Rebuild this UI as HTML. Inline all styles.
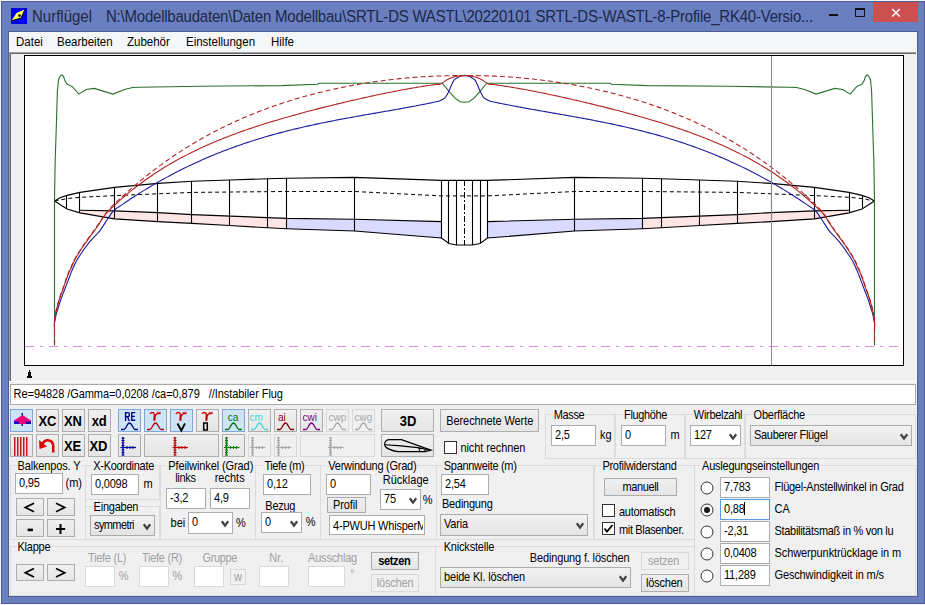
<!DOCTYPE html>
<html><head><meta charset="utf-8"><style>
html,body{margin:0;padding:0;width:925px;height:605px;overflow:hidden;background:#fff;}
body{position:relative;font-family:"Liberation Sans", sans-serif;}
div{font-family:"Liberation Sans", sans-serif;}
</style></head><body>
<div style="position:absolute;left:0px;top:0px;width:925px;height:605px;background:#f4f6fb;"></div>
<div style="position:absolute;left:1px;top:1px;width:924px;height:603px;background:#4d5d92;"></div>
<div style="position:absolute;left:2px;top:2px;width:922px;height:601px;background:#6a7fc0;"></div>
<div style="position:absolute;left:8px;top:31px;width:910px;height:566px;background:#4d5d92;"></div>
<svg style="position:absolute;left:11px;top:8px" width="16" height="16"><rect width="16" height="16" fill="#0000f0"/><path d="M0.5 12.8 L5.5 5 L14 1.2 L10 10 Z" fill="#ffff60"/><path d="M14 1.2 L10 10 L0.5 12.8" fill="none" stroke="#000" stroke-width="0.9"/><circle cx="8.5" cy="7.6" r="1.3" fill="#000"/></svg>
<div style="position:absolute;left:32px;top:9.00px;font-size:15px;line-height:15px;color:#1c2848;font-weight:normal;letter-spacing:0px;white-space:pre;transform:scaleY(1.1);transform-origin:0 13.000px;">Nurflügel</div>
<div style="position:absolute;left:106px;top:9.00px;font-size:15px;line-height:15px;color:#1c2848;font-weight:normal;letter-spacing:-0.22px;white-space:pre;transform:scaleY(1.1);transform-origin:0 13.000px;">N:\Modellbaudaten\Daten Modellbau\SRTL-DS WASTL\20220101 SRTL-DS-WASTL-8-Profile_RK40-Versio...</div>
<div style="position:absolute;left:873px;top:2px;width:45px;height:20px;background:#cd5050;"></div>
<svg style="position:absolute;left:891px;top:8px" width="11" height="11"><path d="M1.3 1 L8.7 8.5 M8.7 1 L1.3 8.5" stroke="#fff" stroke-width="1.5"/></svg>
<div style="position:absolute;left:855px;top:8px;width:10px;height:9px;box-sizing:border-box;border:1px solid #111;border-top-width:2px;"></div>
<div style="position:absolute;left:829px;top:14px;width:9px;height:2px;background:#111;"></div>
<div style="position:absolute;left:9px;top:32px;width:908px;height:564px;background:#f0f0f0;"></div>
<div style="position:absolute;left:9px;top:32px;width:908px;height:20px;background:#f5f6f7;"></div>
<div style="position:absolute;left:16px;top:37.00px;font-size:11.5px;line-height:11.5px;color:#000;font-weight:normal;letter-spacing:0px;white-space:pre;transform:scaleY(1.1);transform-origin:0 9.000px;">Datei</div>
<div style="position:absolute;left:57px;top:37.00px;font-size:11.5px;line-height:11.5px;color:#000;font-weight:normal;letter-spacing:0px;white-space:pre;transform:scaleY(1.1);transform-origin:0 9.000px;">Bearbeiten</div>
<div style="position:absolute;left:127px;top:37.00px;font-size:11.5px;line-height:11.5px;color:#000;font-weight:normal;letter-spacing:0px;white-space:pre;transform:scaleY(1.1);transform-origin:0 9.000px;">Zubehör</div>
<div style="position:absolute;left:186px;top:37.00px;font-size:11.5px;line-height:11.5px;color:#000;font-weight:normal;letter-spacing:0px;white-space:pre;transform:scaleY(1.1);transform-origin:0 9.000px;">Einstellungen</div>
<div style="position:absolute;left:271px;top:37.00px;font-size:11.5px;line-height:11.5px;color:#000;font-weight:normal;letter-spacing:0px;white-space:pre;transform:scaleY(1.1);transform-origin:0 9.000px;">Hilfe</div>
<div style="position:absolute;left:9px;top:52px;width:908px;height:1px;background:#a0a0a0;"></div>
<div style="position:absolute;left:9px;top:53px;width:908px;height:1px;background:#696969;"></div>
<div style="position:absolute;left:9px;top:52px;width:1px;height:330px;background:#a0a0a0;"></div>
<div style="position:absolute;left:10px;top:53px;width:1px;height:328px;background:#696969;"></div>
<div style="position:absolute;left:9px;top:381px;width:908px;height:1px;background:#fff;"></div>
<div style="position:absolute;left:916px;top:52px;width:1px;height:330px;background:#fff;"></div>
<div style="position:absolute;left:24px;top:55px;width:880px;height:311px;box-sizing:border-box;border:1px solid #000;background:#fff;"></div>
<svg style="position:absolute;left:0;top:0" width="925" height="605" viewBox="0 0 925 605"><defs><clipPath id="cb"><rect x="25" y="56" width="878" height="309"/></clipPath></defs><g clip-path="url(#cb)"><path d="M80.00 210.20 L114.50 210.90 L158.00 212.60 L192.00 214.60 L229.50 216.11 L268.00 217.66 L286.50 218.40 L286.50 228.80 L268.00 227.80 L229.50 225.50 L192.00 223.40 L158.00 221.60 L114.50 218.90 L80.00 212.90 Z" fill="#ffe6e6"/><path d="M849.00 212.90 L814.50 218.90 L771.00 221.60 L737.00 223.40 L699.50 225.50 L661.00 227.80 L642.50 228.80 L642.50 218.40 L661.00 217.66 L699.50 216.11 L737.00 214.60 L771.00 212.60 L814.50 210.90 L849.00 210.20 Z" fill="#ffe6e6"/><path d="M286.50 218.40 L354.50 219.30 L441.50 221.60 L441.50 238.00 L354.50 231.00 L286.50 228.80 Z" fill="#dadaff"/><path d="M642.50 228.80 L574.50 231.00 L487.50 238.00 L487.50 221.60 L574.50 219.30 L642.50 218.40 Z" fill="#dadaff"/><path d="M54.50 201.00 L60.00 197.80 L67.00 195.40 L80.00 192.40 L114.50 187.40 L158.00 183.40 L192.00 181.30 L229.50 180.00 L268.00 178.80 L286.50 178.20 L354.50 177.40 L441.50 180.40 L464.50 180.40 L487.50 180.40 L574.50 177.40 L642.50 178.20 L661.00 178.80 L699.50 180.00 L737.00 181.30 L771.00 183.40 L814.50 187.40 L849.00 192.40 L862.00 195.40 L869.00 197.80 L874.50 201.00" fill="none" stroke="#000" stroke-width="1.1"/><path d="M54.50 201.00 L67.00 209.00 L80.00 212.90 L114.50 218.90 L158.00 221.60 L192.00 223.40 L229.50 225.50 L268.00 227.80 L286.50 228.80 L354.50 231.00 L441.50 238.00 L449.00 243.50 L456.50 245.00 L464.50 245.00 L472.50 245.00 L480.00 243.50 L487.50 238.00 L574.50 231.00 L642.50 228.80 L661.00 227.80 L699.50 225.50 L737.00 223.40 L771.00 221.60 L814.50 218.90 L849.00 212.90 L862.00 209.00 L874.50 201.00" fill="none" stroke="#000" stroke-width="1.1"/><path d="M80.00 210.20 L114.50 210.90 L158.00 212.60 L192.00 214.60 L286.50 218.40 L354.50 219.30 L441.50 221.60" fill="none" stroke="#000" stroke-width="1.1"/><path d="M487.50 221.60 L574.50 219.30 L642.50 218.40 L737.00 214.60 L771.00 212.60 L814.50 210.90 L849.00 210.20" fill="none" stroke="#000" stroke-width="1.1"/><path d="M54.50 201.00 L67.00 198.60 L80.00 197.30 L114.50 195.60 L192.00 192.40 L286.50 191.50 L354.50 191.50 L441.50 195.90 L464.50 195.90 L487.50 195.90 L574.50 191.50 L642.50 191.50 L737.00 192.40 L814.50 195.60 L849.00 197.30 L862.00 198.60 L874.50 201.00" fill="none" stroke="#000" stroke-width="1" stroke-dasharray="4 3"/><line x1="66.5" y1="195.6" x2="66.5" y2="208.7" stroke="#000" stroke-width="1.1"/><line x1="862.5" y1="195.6" x2="862.5" y2="208.7" stroke="#000" stroke-width="1.1"/><line x1="79.5" y1="192.5" x2="79.5" y2="212.8" stroke="#000" stroke-width="1.1"/><line x1="849.5" y1="192.5" x2="849.5" y2="212.8" stroke="#000" stroke-width="1.1"/><line x1="114.5" y1="187.4" x2="114.5" y2="218.9" stroke="#000" stroke-width="1.1"/><line x1="814.5" y1="187.4" x2="814.5" y2="218.9" stroke="#000" stroke-width="1.1"/><line x1="157.5" y1="183.4" x2="157.5" y2="221.6" stroke="#000" stroke-width="1.1"/><line x1="771.5" y1="183.4" x2="771.5" y2="221.6" stroke="#000" stroke-width="1.1"/><line x1="191.5" y1="181.3" x2="191.5" y2="223.4" stroke="#000" stroke-width="1.1"/><line x1="737.5" y1="181.3" x2="737.5" y2="223.4" stroke="#000" stroke-width="1.1"/><line x1="229.5" y1="180.0" x2="229.5" y2="225.5" stroke="#000" stroke-width="1.1"/><line x1="699.5" y1="180.0" x2="699.5" y2="225.5" stroke="#000" stroke-width="1.1"/><line x1="267.5" y1="178.8" x2="267.5" y2="227.8" stroke="#000" stroke-width="1.1"/><line x1="661.5" y1="178.8" x2="661.5" y2="227.8" stroke="#000" stroke-width="1.1"/><line x1="286.5" y1="178.2" x2="286.5" y2="228.8" stroke="#000" stroke-width="1.1"/><line x1="642.5" y1="178.2" x2="642.5" y2="228.8" stroke="#000" stroke-width="1.1"/><line x1="354.5" y1="177.4" x2="354.5" y2="231.0" stroke="#000" stroke-width="1.1"/><line x1="574.5" y1="177.4" x2="574.5" y2="231.0" stroke="#000" stroke-width="1.1"/><line x1="441.5" y1="180.4" x2="441.5" y2="238.0" stroke="#000" stroke-width="1.1"/><line x1="487.5" y1="180.4" x2="487.5" y2="238.0" stroke="#000" stroke-width="1.1"/><line x1="448.5" y1="180.4" x2="448.5" y2="243.1" stroke="#000" stroke-width="1.1"/><line x1="480.5" y1="180.4" x2="480.5" y2="243.1" stroke="#000" stroke-width="1.1"/><line x1="456.5" y1="180.4" x2="456.5" y2="245.0" stroke="#000" stroke-width="1.1"/><line x1="472.5" y1="180.4" x2="472.5" y2="245.0" stroke="#000" stroke-width="1.1"/><line x1="464.5" y1="180" x2="464.5" y2="245" stroke="#000" stroke-width="1" stroke-dasharray="6 2 2 2"/><path d="M54.50 345.50 L54.50 200.00 L55.20 160.00 L56.20 130.00 L57.40 91.20 L58.50 79.70 L60.50 75.60 L62.00 75.00 L63.60 76.50 L64.90 80.80 L67.20 84.30 L72.40 86.60 L78.80 94.10 L86.30 89.50 L94.40 88.40 L112.90 94.10 L124.50 89.50 L132.60 87.50 L140.00 87.30 L200.00 86.30 L282.00 85.60 L317.70 84.20 L318.50 83.30 L442.20 83.20 L449.00 91.30 L455.00 98.20 L460.00 101.70 L464.50 102.20 L469.00 101.70 L474.00 98.20 L480.00 91.30 L486.80 83.20 L610.50 83.30 L611.30 84.20 L647.00 85.60 L729.00 86.30 L789.00 87.30 L796.40 87.50 L804.50 89.50 L816.10 94.10 L834.60 88.40 L842.70 89.50 L850.20 94.10 L856.60 86.60 L861.80 84.30 L864.10 80.80 L865.40 76.50 L867.00 75.00 L868.50 75.60 L870.50 79.70 L871.60 91.20 L872.80 130.00 L873.80 160.00 L874.50 200.00 L874.50 345.50" fill="none" stroke="#2a702a" stroke-width="1.1"/><path d="M54.50 323.00 C54.75 321.67 55.38 317.50 56.00 315.00 C56.62 312.50 57.37 310.67 58.20 308.00 C59.03 305.33 59.95 302.00 61.00 299.00 C62.05 296.00 63.00 293.92 64.50 290.00 C66.00 286.08 68.50 279.33 70.00 275.50 C71.50 271.67 72.18 269.83 73.50 267.00 C74.82 264.17 75.18 262.72 77.90 258.50 C80.62 254.28 86.15 246.32 89.80 241.70 C93.45 237.08 96.82 234.62 99.80 230.80 C102.78 226.98 105.38 222.18 107.70 218.80 C110.02 215.42 112.03 212.35 113.70 210.49 C115.37 208.64 116.37 208.61 117.70 207.67 C119.03 206.74 120.37 205.82 121.70 204.91 C123.03 204.00 124.37 203.09 125.70 202.19 C127.03 201.30 128.37 200.41 129.70 199.53 C131.03 198.65 132.37 197.78 133.70 196.92 C135.03 196.06 136.37 195.21 137.70 194.36 C139.03 193.52 140.37 192.68 141.70 191.86 C143.03 191.03 144.37 190.21 145.70 189.40 C147.03 188.59 148.37 187.79 149.70 186.99 C151.03 186.20 152.37 185.41 153.70 184.64 C155.03 183.86 156.37 183.09 157.70 182.33 C159.03 181.57 160.37 180.82 161.70 180.07 C163.03 179.33 164.37 178.59 165.70 177.86 C167.03 177.13 168.37 176.41 169.70 175.70 C171.03 174.99 172.37 174.28 173.70 173.59 C175.03 172.89 176.37 172.20 177.70 171.52 C179.03 170.84 180.37 170.16 181.70 169.50 C183.03 168.83 184.37 168.18 185.70 167.53 C187.03 166.88 188.37 166.23 189.70 165.60 C191.03 164.96 192.37 164.34 193.70 163.71 C195.03 163.09 196.37 162.48 197.70 161.88 C199.03 161.27 200.37 160.67 201.70 160.08 C203.03 159.49 204.37 158.91 205.70 158.33 C207.03 157.75 208.37 157.19 209.70 156.62 C211.03 156.06 212.37 155.50 213.70 154.96 C215.03 154.41 216.37 153.87 217.70 153.33 C219.03 152.80 220.37 152.27 221.70 151.75 C223.03 151.23 224.37 150.71 225.70 150.20 C227.03 149.70 228.37 149.19 229.70 148.70 C231.03 148.20 232.37 147.71 233.70 147.23 C235.03 146.75 236.37 146.27 237.70 145.80 C239.03 145.33 240.37 144.87 241.70 144.41 C243.03 143.96 244.37 143.50 245.70 143.06 C247.03 142.61 248.37 142.17 249.70 141.74 C251.03 141.30 252.37 140.88 253.70 140.45 C255.03 140.03 256.37 139.62 257.70 139.20 C259.03 138.79 260.37 138.39 261.70 137.99 C263.03 137.59 264.37 137.19 265.70 136.80 C267.03 136.41 268.37 136.03 269.70 135.65 C271.03 135.27 272.37 134.89 273.70 134.52 C275.03 134.15 276.37 133.79 277.70 133.43 C279.03 133.07 280.37 132.72 281.70 132.36 C283.03 132.01 284.37 131.67 285.70 131.33 C287.03 130.99 288.37 130.65 289.70 130.32 C291.03 129.98 292.37 129.66 293.70 129.33 C295.03 129.01 296.37 128.69 297.70 128.37 C299.03 128.06 300.37 127.74 301.70 127.44 C303.03 127.13 304.37 126.82 305.70 126.52 C307.03 126.22 308.37 125.92 309.70 125.63 C311.03 125.34 312.37 125.05 313.70 124.76 C315.03 124.47 316.37 124.19 317.70 123.91 C319.03 123.63 320.37 123.35 321.70 123.07 C323.03 122.80 324.37 122.53 325.70 122.26 C327.03 121.99 328.37 121.72 329.70 121.46 C331.03 121.20 332.37 120.93 333.70 120.68 C335.03 120.42 336.37 120.16 337.70 119.91 C339.03 119.65 340.37 119.40 341.70 119.15 C343.03 118.90 344.37 118.65 345.70 118.40 C347.03 118.16 348.37 117.91 349.70 117.67 C351.03 117.42 352.37 117.18 353.70 116.94 C355.03 116.70 356.37 116.46 357.70 116.22 C359.03 115.99 360.37 115.75 361.70 115.51 C363.03 115.28 364.37 115.04 365.70 114.81 C367.03 114.57 368.37 114.34 369.70 114.10 C371.03 113.87 372.37 113.64 373.70 113.41 C375.03 113.17 376.37 112.94 377.70 112.71 C379.03 112.48 380.37 112.24 381.70 112.01 C383.03 111.78 384.37 111.55 385.70 111.31 C387.03 111.08 388.37 110.85 389.70 110.61 C391.03 110.38 392.37 110.14 393.70 109.91 C395.03 109.67 396.37 109.44 397.70 109.20 C399.03 108.96 400.37 108.72 401.70 108.48 C403.03 108.24 404.37 108.00 405.70 107.76 C407.03 107.51 408.37 107.27 409.70 107.02 C411.03 106.77 412.37 106.53 413.70 106.28 C415.03 106.02 416.37 105.77 417.70 105.52 C419.03 105.26 420.37 105.01 421.70 104.74 C423.03 104.48 424.37 104.22 425.70 103.96 C427.03 103.69 428.37 103.42 429.70 103.15 C431.03 102.88 432.37 102.61 433.70 102.33 C435.03 102.05 436.85 101.66 437.70 101.48 C438.55 101.30 437.60 101.86 438.80 101.25 C440.00 100.63 443.22 99.49 444.90 97.80 C446.58 96.11 447.80 93.23 448.90 91.10 C450.00 88.97 450.62 86.87 451.50 85.00 C452.38 83.13 453.10 81.18 454.20 79.90 C455.30 78.62 456.88 77.98 458.10 77.30 C459.32 76.62 460.43 76.13 461.50 75.80 C462.57 75.47 463.50 75.30 464.50 75.30 C465.50 75.30 466.43 75.47 467.50 75.80 C468.57 76.13 469.68 76.62 470.90 77.30 C472.12 77.98 473.70 78.62 474.80 79.90 C475.90 81.18 476.62 83.13 477.50 85.00 C478.38 86.87 479.00 88.97 480.10 91.10 C481.20 93.23 482.42 96.11 484.10 97.80 C485.78 99.49 489.00 100.63 490.20 101.25 C491.40 101.86 490.45 101.30 491.30 101.48 C492.15 101.66 493.97 102.05 495.30 102.33 C496.63 102.61 497.97 102.88 499.30 103.15 C500.63 103.42 501.97 103.69 503.30 103.96 C504.63 104.22 505.97 104.48 507.30 104.74 C508.63 105.01 509.97 105.26 511.30 105.52 C512.63 105.77 513.97 106.02 515.30 106.28 C516.63 106.53 517.97 106.77 519.30 107.02 C520.63 107.27 521.97 107.51 523.30 107.76 C524.63 108.00 525.97 108.24 527.30 108.48 C528.63 108.72 529.97 108.96 531.30 109.20 C532.63 109.44 533.97 109.67 535.30 109.91 C536.63 110.14 537.97 110.38 539.30 110.61 C540.63 110.85 541.97 111.08 543.30 111.31 C544.63 111.55 545.97 111.78 547.30 112.01 C548.63 112.24 549.97 112.48 551.30 112.71 C552.63 112.94 553.97 113.17 555.30 113.41 C556.63 113.64 557.97 113.87 559.30 114.10 C560.63 114.34 561.97 114.57 563.30 114.81 C564.63 115.04 565.97 115.28 567.30 115.51 C568.63 115.75 569.97 115.99 571.30 116.22 C572.63 116.46 573.97 116.70 575.30 116.94 C576.63 117.18 577.97 117.42 579.30 117.67 C580.63 117.91 581.97 118.16 583.30 118.40 C584.63 118.65 585.97 118.90 587.30 119.15 C588.63 119.40 589.97 119.65 591.30 119.91 C592.63 120.16 593.97 120.42 595.30 120.68 C596.63 120.93 597.97 121.20 599.30 121.46 C600.63 121.72 601.97 121.99 603.30 122.26 C604.63 122.53 605.97 122.80 607.30 123.07 C608.63 123.35 609.97 123.63 611.30 123.91 C612.63 124.19 613.97 124.47 615.30 124.76 C616.63 125.05 617.97 125.34 619.30 125.63 C620.63 125.92 621.97 126.22 623.30 126.52 C624.63 126.82 625.97 127.13 627.30 127.44 C628.63 127.74 629.97 128.06 631.30 128.37 C632.63 128.69 633.97 129.01 635.30 129.33 C636.63 129.66 637.97 129.98 639.30 130.32 C640.63 130.65 641.97 130.99 643.30 131.33 C644.63 131.67 645.97 132.01 647.30 132.36 C648.63 132.72 649.97 133.07 651.30 133.43 C652.63 133.79 653.97 134.15 655.30 134.52 C656.63 134.89 657.97 135.27 659.30 135.65 C660.63 136.03 661.97 136.41 663.30 136.80 C664.63 137.19 665.97 137.59 667.30 137.99 C668.63 138.39 669.97 138.79 671.30 139.20 C672.63 139.62 673.97 140.03 675.30 140.45 C676.63 140.88 677.97 141.30 679.30 141.74 C680.63 142.17 681.97 142.61 683.30 143.06 C684.63 143.50 685.97 143.96 687.30 144.41 C688.63 144.87 689.97 145.33 691.30 145.80 C692.63 146.27 693.97 146.75 695.30 147.23 C696.63 147.71 697.97 148.20 699.30 148.70 C700.63 149.19 701.97 149.70 703.30 150.20 C704.63 150.71 705.97 151.23 707.30 151.75 C708.63 152.27 709.97 152.80 711.30 153.33 C712.63 153.87 713.97 154.41 715.30 154.96 C716.63 155.50 717.97 156.06 719.30 156.62 C720.63 157.19 721.97 157.75 723.30 158.33 C724.63 158.91 725.97 159.49 727.30 160.08 C728.63 160.67 729.97 161.27 731.30 161.88 C732.63 162.48 733.97 163.09 735.30 163.71 C736.63 164.34 737.97 164.96 739.30 165.60 C740.63 166.23 741.97 166.88 743.30 167.53 C744.63 168.18 745.97 168.83 747.30 169.50 C748.63 170.16 749.97 170.84 751.30 171.52 C752.63 172.20 753.97 172.89 755.30 173.59 C756.63 174.28 757.97 174.99 759.30 175.70 C760.63 176.41 761.97 177.13 763.30 177.86 C764.63 178.59 765.97 179.33 767.30 180.07 C768.63 180.82 769.97 181.57 771.30 182.33 C772.63 183.09 773.97 183.86 775.30 184.64 C776.63 185.41 777.97 186.20 779.30 186.99 C780.63 187.79 781.97 188.59 783.30 189.40 C784.63 190.21 785.97 191.03 787.30 191.86 C788.63 192.68 789.97 193.52 791.30 194.36 C792.63 195.21 793.97 196.06 795.30 196.92 C796.63 197.78 797.97 198.65 799.30 199.53 C800.63 200.41 801.97 201.30 803.30 202.19 C804.63 203.09 805.97 204.00 807.30 204.91 C808.63 205.82 809.97 206.74 811.30 207.67 C812.63 208.61 813.63 208.64 815.30 210.49 C816.97 212.35 818.98 215.42 821.30 218.80 C823.62 222.18 826.22 226.98 829.20 230.80 C832.18 234.62 835.55 237.08 839.20 241.70 C842.85 246.32 848.38 254.28 851.10 258.50 C853.82 262.72 854.18 264.17 855.50 267.00 C856.82 269.83 857.50 271.67 859.00 275.50 C860.50 279.33 863.00 286.08 864.50 290.00 C866.00 293.92 866.95 296.00 868.00 299.00 C869.05 302.00 869.97 305.33 870.80 308.00 C871.63 310.67 872.38 312.50 873.00 315.00 C873.62 317.50 874.25 321.67 874.50 323.00" fill="none" stroke="#1c1c9c" stroke-width="1.1"/><path d="M54.50 330.00 C54.50 328.50 54.25 324.00 54.50 321.00 C54.75 318.00 55.42 314.83 56.00 312.00 C56.58 309.17 57.20 306.83 58.00 304.00 C58.80 301.17 60.02 297.33 60.80 295.00 C61.58 292.67 61.50 293.33 62.70 290.00 C63.90 286.67 66.45 279.00 68.00 275.00 C69.55 271.00 70.75 268.75 72.00 266.00 C73.25 263.25 73.35 262.22 75.50 258.50 C77.65 254.78 81.52 248.65 84.90 243.70 C88.28 238.75 92.33 233.77 95.80 228.80 C99.27 223.83 102.88 217.54 105.70 213.90 C108.52 210.26 110.87 208.73 112.70 206.96 C114.53 205.18 115.37 204.47 116.70 203.26 C118.03 202.05 119.37 200.86 120.70 199.69 C122.03 198.51 123.37 197.36 124.70 196.23 C126.03 195.09 127.37 193.98 128.70 192.88 C130.03 191.78 131.37 190.71 132.70 189.65 C134.03 188.58 135.37 187.54 136.70 186.51 C138.03 185.49 139.37 184.48 140.70 183.49 C142.03 182.49 143.37 181.52 144.70 180.56 C146.03 179.59 147.37 178.65 148.70 177.72 C150.03 176.79 151.37 175.88 152.70 174.98 C154.03 174.08 155.37 173.19 156.70 172.32 C158.03 171.45 159.37 170.59 160.70 169.75 C162.03 168.91 163.37 168.08 164.70 167.26 C166.03 166.45 167.37 165.64 168.70 164.85 C170.03 164.06 171.37 163.29 172.70 162.52 C174.03 161.75 175.37 161.00 176.70 160.26 C178.03 159.52 179.37 158.79 180.70 158.07 C182.03 157.35 183.37 156.64 184.70 155.94 C186.03 155.25 187.37 154.56 188.70 153.88 C190.03 153.21 191.37 152.54 192.70 151.89 C194.03 151.23 195.37 150.59 196.70 149.95 C198.03 149.31 199.37 148.68 200.70 148.07 C202.03 147.45 203.37 146.84 204.70 146.24 C206.03 145.64 207.37 145.05 208.70 144.46 C210.03 143.88 211.37 143.30 212.70 142.73 C214.03 142.17 215.37 141.61 216.70 141.05 C218.03 140.50 219.37 139.96 220.70 139.42 C222.03 138.88 223.37 138.35 224.70 137.83 C226.03 137.30 227.37 136.79 228.70 136.27 C230.03 135.76 231.37 135.26 232.70 134.76 C234.03 134.26 235.37 133.77 236.70 133.28 C238.03 132.80 239.37 132.32 240.70 131.84 C242.03 131.37 243.37 130.90 244.70 130.43 C246.03 129.97 247.37 129.51 248.70 129.06 C250.03 128.60 251.37 128.15 252.70 127.71 C254.03 127.27 255.37 126.83 256.70 126.39 C258.03 125.96 259.37 125.53 260.70 125.10 C262.03 124.67 263.37 124.25 264.70 123.83 C266.03 123.41 267.37 123.00 268.70 122.59 C270.03 122.18 271.37 121.77 272.70 121.37 C274.03 120.97 275.37 120.57 276.70 120.17 C278.03 119.77 279.37 119.38 280.70 118.99 C282.03 118.60 283.37 118.21 284.70 117.83 C286.03 117.45 287.37 117.07 288.70 116.69 C290.03 116.31 291.37 115.94 292.70 115.57 C294.03 115.19 295.37 114.83 296.70 114.46 C298.03 114.09 299.37 113.73 300.70 113.37 C302.03 113.00 303.37 112.65 304.70 112.29 C306.03 111.93 307.37 111.58 308.70 111.23 C310.03 110.87 311.37 110.52 312.70 110.18 C314.03 109.83 315.37 109.48 316.70 109.14 C318.03 108.80 319.37 108.46 320.70 108.12 C322.03 107.78 323.37 107.44 324.70 107.10 C326.03 106.77 327.37 106.44 328.70 106.10 C330.03 105.77 331.37 105.44 332.70 105.12 C334.03 104.79 335.37 104.46 336.70 104.14 C338.03 103.82 339.37 103.49 340.70 103.17 C342.03 102.86 343.37 102.54 344.70 102.22 C346.03 101.90 347.37 101.59 348.70 101.28 C350.03 100.97 351.37 100.66 352.70 100.35 C354.03 100.04 355.37 99.73 356.70 99.43 C358.03 99.12 359.37 98.82 360.70 98.52 C362.03 98.22 363.37 97.92 364.70 97.63 C366.03 97.33 367.37 97.03 368.70 96.74 C370.03 96.45 371.37 96.16 372.70 95.87 C374.03 95.59 375.37 95.30 376.70 95.02 C378.03 94.73 379.37 94.45 380.70 94.18 C382.03 93.90 383.37 93.62 384.70 93.35 C386.03 93.08 387.37 92.80 388.70 92.54 C390.03 92.27 391.37 92.00 392.70 91.74 C394.03 91.48 395.37 91.22 396.70 90.96 C398.03 90.71 399.37 90.45 400.70 90.20 C402.03 89.95 403.37 89.71 404.70 89.46 C406.03 89.22 407.37 88.98 408.70 88.74 C410.03 88.51 411.37 88.27 412.70 88.04 C414.03 87.81 415.37 87.59 416.70 87.37 C418.03 87.15 419.37 86.93 420.70 86.71 C422.03 86.50 423.37 86.29 424.70 86.09 C426.03 85.88 427.37 85.68 428.70 85.49 C430.03 85.29 431.37 85.10 432.70 84.91 C434.03 84.73 435.40 84.54 436.70 84.37 C438.00 84.20 438.45 84.81 440.50 83.88 C442.55 82.96 446.25 80.08 449.00 78.80 C451.75 77.52 454.42 76.73 457.00 76.20 C459.58 75.67 462.00 75.60 464.50 75.60 C467.00 75.60 469.42 75.67 472.00 76.20 C474.58 76.73 477.25 77.52 480.00 78.80 C482.75 80.08 486.45 82.96 488.50 83.88 C490.55 84.81 491.00 84.20 492.30 84.37 C493.60 84.54 494.97 84.73 496.30 84.91 C497.63 85.10 498.97 85.29 500.30 85.49 C501.63 85.68 502.97 85.88 504.30 86.09 C505.63 86.29 506.97 86.50 508.30 86.71 C509.63 86.93 510.97 87.15 512.30 87.37 C513.63 87.59 514.97 87.81 516.30 88.04 C517.63 88.27 518.97 88.51 520.30 88.74 C521.63 88.98 522.97 89.22 524.30 89.46 C525.63 89.71 526.97 89.95 528.30 90.20 C529.63 90.45 530.97 90.71 532.30 90.96 C533.63 91.22 534.97 91.48 536.30 91.74 C537.63 92.00 538.97 92.27 540.30 92.54 C541.63 92.80 542.97 93.08 544.30 93.35 C545.63 93.62 546.97 93.90 548.30 94.18 C549.63 94.45 550.97 94.73 552.30 95.02 C553.63 95.30 554.97 95.59 556.30 95.87 C557.63 96.16 558.97 96.45 560.30 96.74 C561.63 97.03 562.97 97.33 564.30 97.63 C565.63 97.92 566.97 98.22 568.30 98.52 C569.63 98.82 570.97 99.12 572.30 99.43 C573.63 99.73 574.97 100.04 576.30 100.35 C577.63 100.66 578.97 100.97 580.30 101.28 C581.63 101.59 582.97 101.90 584.30 102.22 C585.63 102.54 586.97 102.86 588.30 103.17 C589.63 103.49 590.97 103.82 592.30 104.14 C593.63 104.46 594.97 104.79 596.30 105.12 C597.63 105.44 598.97 105.77 600.30 106.10 C601.63 106.44 602.97 106.77 604.30 107.10 C605.63 107.44 606.97 107.78 608.30 108.12 C609.63 108.46 610.97 108.80 612.30 109.14 C613.63 109.48 614.97 109.83 616.30 110.18 C617.63 110.52 618.97 110.87 620.30 111.23 C621.63 111.58 622.97 111.93 624.30 112.29 C625.63 112.65 626.97 113.00 628.30 113.37 C629.63 113.73 630.97 114.09 632.30 114.46 C633.63 114.83 634.97 115.19 636.30 115.57 C637.63 115.94 638.97 116.31 640.30 116.69 C641.63 117.07 642.97 117.45 644.30 117.83 C645.63 118.21 646.97 118.60 648.30 118.99 C649.63 119.38 650.97 119.77 652.30 120.17 C653.63 120.57 654.97 120.97 656.30 121.37 C657.63 121.77 658.97 122.18 660.30 122.59 C661.63 123.00 662.97 123.41 664.30 123.83 C665.63 124.25 666.97 124.67 668.30 125.10 C669.63 125.53 670.97 125.96 672.30 126.39 C673.63 126.83 674.97 127.27 676.30 127.71 C677.63 128.15 678.97 128.60 680.30 129.06 C681.63 129.51 682.97 129.97 684.30 130.43 C685.63 130.90 686.97 131.37 688.30 131.84 C689.63 132.32 690.97 132.80 692.30 133.28 C693.63 133.77 694.97 134.26 696.30 134.76 C697.63 135.26 698.97 135.76 700.30 136.27 C701.63 136.79 702.97 137.30 704.30 137.83 C705.63 138.35 706.97 138.88 708.30 139.42 C709.63 139.96 710.97 140.50 712.30 141.05 C713.63 141.61 714.97 142.17 716.30 142.73 C717.63 143.30 718.97 143.88 720.30 144.46 C721.63 145.05 722.97 145.64 724.30 146.24 C725.63 146.84 726.97 147.45 728.30 148.07 C729.63 148.68 730.97 149.31 732.30 149.95 C733.63 150.59 734.97 151.23 736.30 151.89 C737.63 152.54 738.97 153.21 740.30 153.88 C741.63 154.56 742.97 155.25 744.30 155.94 C745.63 156.64 746.97 157.35 748.30 158.07 C749.63 158.79 750.97 159.52 752.30 160.26 C753.63 161.00 754.97 161.75 756.30 162.52 C757.63 163.29 758.97 164.06 760.30 164.85 C761.63 165.64 762.97 166.45 764.30 167.26 C765.63 168.08 766.97 168.91 768.30 169.75 C769.63 170.59 770.97 171.45 772.30 172.32 C773.63 173.19 774.97 174.08 776.30 174.98 C777.63 175.88 778.97 176.79 780.30 177.72 C781.63 178.65 782.97 179.59 784.30 180.56 C785.63 181.52 786.97 182.49 788.30 183.49 C789.63 184.48 790.97 185.49 792.30 186.51 C793.63 187.54 794.97 188.58 796.30 189.65 C797.63 190.71 798.97 191.78 800.30 192.88 C801.63 193.98 802.97 195.09 804.30 196.23 C805.63 197.36 806.97 198.51 808.30 199.69 C809.63 200.86 810.97 202.05 812.30 203.26 C813.63 204.47 814.47 205.18 816.30 206.96 C818.13 208.73 820.48 210.26 823.30 213.90 C826.12 217.54 829.73 223.83 833.20 228.80 C836.67 233.77 840.72 238.75 844.10 243.70 C847.48 248.65 851.35 254.78 853.50 258.50 C855.65 262.22 855.75 263.25 857.00 266.00 C858.25 268.75 859.45 271.00 861.00 275.00 C862.55 279.00 865.10 286.67 866.30 290.00 C867.50 293.33 867.42 292.67 868.20 295.00 C868.98 297.33 870.20 301.17 871.00 304.00 C871.80 306.83 872.42 309.17 873.00 312.00 C873.58 314.83 874.25 318.00 874.50 321.00 C874.75 324.00 874.50 328.50 874.50 330.00" fill="none" stroke="#b02424" stroke-width="1.1"/><path d="M54.50 345.00 C54.50 342.50 54.50 334.00 54.50 330.00 C54.50 326.00 54.28 324.00 54.50 321.00 C54.72 318.00 55.25 314.83 55.80 312.00 C56.35 309.17 57.02 306.83 57.80 304.00 C58.58 301.17 59.73 297.33 60.50 295.00 C61.27 292.67 61.23 293.33 62.40 290.00 C63.57 286.67 65.98 279.00 67.50 275.00 C69.02 271.00 70.25 268.75 71.50 266.00 C72.75 263.25 72.85 262.22 75.00 258.50 C77.15 254.78 81.02 248.65 84.40 243.70 C87.78 238.75 91.83 233.77 95.30 228.80 C98.77 223.83 102.38 217.69 105.20 213.90 C108.02 210.11 110.37 207.99 112.20 206.05 C114.03 204.10 114.87 203.47 116.20 202.21 C117.53 200.94 118.87 199.69 120.20 198.46 C121.53 197.22 122.87 196.00 124.20 194.79 C125.53 193.58 126.87 192.39 128.20 191.21 C129.53 190.03 130.87 188.87 132.20 187.71 C133.53 186.56 134.87 185.42 136.20 184.30 C137.53 183.17 138.87 182.06 140.20 180.96 C141.53 179.86 142.87 178.78 144.20 177.70 C145.53 176.63 146.87 175.57 148.20 174.52 C149.53 173.47 150.87 172.44 152.20 171.42 C153.53 170.39 154.87 169.38 156.20 168.38 C157.53 167.38 158.87 166.40 160.20 165.42 C161.53 164.45 162.87 163.48 164.20 162.53 C165.53 161.58 166.87 160.64 168.20 159.71 C169.53 158.78 170.87 157.86 172.20 156.96 C173.53 156.05 174.87 155.16 176.20 154.27 C177.53 153.39 178.87 152.51 180.20 151.65 C181.53 150.79 182.87 149.93 184.20 149.09 C185.53 148.25 186.87 147.42 188.20 146.60 C189.53 145.78 190.87 144.97 192.20 144.16 C193.53 143.36 194.87 142.57 196.20 141.79 C197.53 141.01 198.87 140.24 200.20 139.48 C201.53 138.72 202.87 137.96 204.20 137.22 C205.53 136.48 206.87 135.74 208.20 135.02 C209.53 134.30 210.87 133.58 212.20 132.88 C213.53 132.17 214.87 131.47 216.20 130.79 C217.53 130.10 218.87 129.42 220.20 128.75 C221.53 128.08 222.87 127.42 224.20 126.76 C225.53 126.11 226.87 125.47 228.20 124.83 C229.53 124.19 230.87 123.56 232.20 122.95 C233.53 122.33 234.87 121.71 236.20 121.11 C237.53 120.51 238.87 119.91 240.20 119.32 C241.53 118.73 242.87 118.16 244.20 117.58 C245.53 117.01 246.87 116.45 248.20 115.89 C249.53 115.33 250.87 114.78 252.20 114.24 C253.53 113.70 254.87 113.16 256.20 112.63 C257.53 112.11 258.87 111.59 260.20 111.07 C261.53 110.56 262.87 110.05 264.20 109.55 C265.53 109.06 266.87 108.56 268.20 108.08 C269.53 107.59 270.87 107.11 272.20 106.64 C273.53 106.17 274.87 105.70 276.20 105.24 C277.53 104.79 278.87 104.33 280.20 103.89 C281.53 103.44 282.87 103.00 284.20 102.57 C285.53 102.14 286.87 101.71 288.20 101.29 C289.53 100.87 290.87 100.45 292.20 100.05 C293.53 99.64 294.87 99.23 296.20 98.84 C297.53 98.44 298.87 98.05 300.20 97.67 C301.53 97.28 302.87 96.90 304.20 96.53 C305.53 96.16 306.87 95.79 308.20 95.43 C309.53 95.07 310.87 94.71 312.20 94.36 C313.53 94.01 314.87 93.67 316.20 93.33 C317.53 92.99 318.87 92.66 320.20 92.33 C321.53 92.00 322.87 91.68 324.20 91.36 C325.53 91.04 326.87 90.73 328.20 90.42 C329.53 90.12 330.87 89.82 332.20 89.52 C333.53 89.22 334.87 88.93 336.20 88.65 C337.53 88.36 338.87 88.08 340.20 87.80 C341.53 87.53 342.87 87.26 344.20 86.99 C345.53 86.72 346.87 86.46 348.20 86.21 C349.53 85.95 350.87 85.70 352.20 85.45 C353.53 85.21 354.87 84.97 356.20 84.73 C357.53 84.49 358.87 84.26 360.20 84.03 C361.53 83.81 362.87 83.59 364.20 83.37 C365.53 83.15 366.87 82.94 368.20 82.73 C369.53 82.52 370.87 82.32 372.20 82.12 C373.53 81.92 374.87 81.73 376.20 81.54 C377.53 81.35 378.87 81.16 380.20 80.98 C381.53 80.80 382.87 80.63 384.20 80.45 C385.53 80.28 386.87 80.12 388.20 79.96 C389.53 79.79 390.87 79.64 392.20 79.48 C393.53 79.33 394.87 79.18 396.20 79.04 C397.53 78.89 398.87 78.75 400.20 78.62 C401.53 78.48 402.87 78.35 404.20 78.23 C405.53 78.10 406.87 77.98 408.20 77.86 C409.53 77.75 410.87 77.64 412.20 77.53 C413.53 77.42 414.87 77.32 416.20 77.22 C417.53 77.12 418.87 77.02 420.20 76.93 C421.53 76.85 422.87 76.76 424.20 76.68 C425.53 76.60 426.87 76.52 428.20 76.45 C429.53 76.38 430.87 76.31 432.20 76.25 C433.53 76.19 434.87 76.13 436.20 76.08 C437.53 76.02 438.87 75.97 440.20 75.93 C441.53 75.89 442.87 75.85 444.20 75.81 C445.53 75.78 446.87 75.75 448.20 75.72 C449.53 75.70 450.87 75.68 452.20 75.66 C453.53 75.64 454.87 75.63 456.20 75.63 C457.53 75.62 458.87 75.62 460.20 75.62 C461.53 75.63 463.48 75.64 464.20 75.65 C464.92 75.65 464.40 75.65 464.50 75.65 C464.60 75.65 464.08 75.65 464.80 75.65 C465.52 75.64 467.47 75.63 468.80 75.62 C470.13 75.62 471.47 75.62 472.80 75.63 C474.13 75.63 475.47 75.64 476.80 75.66 C478.13 75.68 479.47 75.70 480.80 75.72 C482.13 75.75 483.47 75.78 484.80 75.81 C486.13 75.85 487.47 75.89 488.80 75.93 C490.13 75.97 491.47 76.02 492.80 76.08 C494.13 76.13 495.47 76.19 496.80 76.25 C498.13 76.31 499.47 76.38 500.80 76.45 C502.13 76.52 503.47 76.60 504.80 76.68 C506.13 76.76 507.47 76.85 508.80 76.93 C510.13 77.02 511.47 77.12 512.80 77.22 C514.13 77.32 515.47 77.42 516.80 77.53 C518.13 77.64 519.47 77.75 520.80 77.86 C522.13 77.98 523.47 78.10 524.80 78.23 C526.13 78.35 527.47 78.48 528.80 78.62 C530.13 78.75 531.47 78.89 532.80 79.04 C534.13 79.18 535.47 79.33 536.80 79.48 C538.13 79.64 539.47 79.79 540.80 79.96 C542.13 80.12 543.47 80.28 544.80 80.45 C546.13 80.63 547.47 80.80 548.80 80.98 C550.13 81.16 551.47 81.35 552.80 81.54 C554.13 81.73 555.47 81.92 556.80 82.12 C558.13 82.32 559.47 82.52 560.80 82.73 C562.13 82.94 563.47 83.15 564.80 83.37 C566.13 83.59 567.47 83.81 568.80 84.03 C570.13 84.26 571.47 84.49 572.80 84.73 C574.13 84.97 575.47 85.21 576.80 85.45 C578.13 85.70 579.47 85.95 580.80 86.21 C582.13 86.46 583.47 86.72 584.80 86.99 C586.13 87.26 587.47 87.53 588.80 87.80 C590.13 88.08 591.47 88.36 592.80 88.65 C594.13 88.93 595.47 89.22 596.80 89.52 C598.13 89.82 599.47 90.12 600.80 90.42 C602.13 90.73 603.47 91.04 604.80 91.36 C606.13 91.68 607.47 92.00 608.80 92.33 C610.13 92.66 611.47 92.99 612.80 93.33 C614.13 93.67 615.47 94.01 616.80 94.36 C618.13 94.71 619.47 95.07 620.80 95.43 C622.13 95.79 623.47 96.16 624.80 96.53 C626.13 96.90 627.47 97.28 628.80 97.67 C630.13 98.05 631.47 98.44 632.80 98.84 C634.13 99.23 635.47 99.64 636.80 100.05 C638.13 100.45 639.47 100.87 640.80 101.29 C642.13 101.71 643.47 102.14 644.80 102.57 C646.13 103.00 647.47 103.44 648.80 103.89 C650.13 104.33 651.47 104.79 652.80 105.24 C654.13 105.70 655.47 106.17 656.80 106.64 C658.13 107.11 659.47 107.59 660.80 108.08 C662.13 108.56 663.47 109.06 664.80 109.55 C666.13 110.05 667.47 110.56 668.80 111.07 C670.13 111.59 671.47 112.11 672.80 112.63 C674.13 113.16 675.47 113.70 676.80 114.24 C678.13 114.78 679.47 115.33 680.80 115.89 C682.13 116.45 683.47 117.01 684.80 117.58 C686.13 118.16 687.47 118.73 688.80 119.32 C690.13 119.91 691.47 120.51 692.80 121.11 C694.13 121.71 695.47 122.33 696.80 122.95 C698.13 123.56 699.47 124.19 700.80 124.83 C702.13 125.47 703.47 126.11 704.80 126.76 C706.13 127.42 707.47 128.08 708.80 128.75 C710.13 129.42 711.47 130.10 712.80 130.79 C714.13 131.47 715.47 132.17 716.80 132.88 C718.13 133.58 719.47 134.30 720.80 135.02 C722.13 135.74 723.47 136.48 724.80 137.22 C726.13 137.96 727.47 138.72 728.80 139.48 C730.13 140.24 731.47 141.01 732.80 141.79 C734.13 142.57 735.47 143.36 736.80 144.16 C738.13 144.97 739.47 145.78 740.80 146.60 C742.13 147.42 743.47 148.25 744.80 149.09 C746.13 149.93 747.47 150.79 748.80 151.65 C750.13 152.51 751.47 153.39 752.80 154.27 C754.13 155.16 755.47 156.05 756.80 156.96 C758.13 157.86 759.47 158.78 760.80 159.71 C762.13 160.64 763.47 161.58 764.80 162.53 C766.13 163.48 767.47 164.45 768.80 165.42 C770.13 166.40 771.47 167.38 772.80 168.38 C774.13 169.38 775.47 170.39 776.80 171.42 C778.13 172.44 779.47 173.47 780.80 174.52 C782.13 175.57 783.47 176.63 784.80 177.70 C786.13 178.78 787.47 179.86 788.80 180.96 C790.13 182.06 791.47 183.17 792.80 184.30 C794.13 185.42 795.47 186.56 796.80 187.71 C798.13 188.87 799.47 190.03 800.80 191.21 C802.13 192.39 803.47 193.58 804.80 194.79 C806.13 196.00 807.47 197.22 808.80 198.46 C810.13 199.69 811.47 200.94 812.80 202.21 C814.13 203.47 814.97 204.10 816.80 206.05 C818.63 207.99 820.98 210.11 823.80 213.90 C826.62 217.69 830.23 223.83 833.70 228.80 C837.17 233.77 841.22 238.75 844.60 243.70 C847.98 248.65 851.85 254.78 854.00 258.50 C856.15 262.22 856.25 263.25 857.50 266.00 C858.75 268.75 859.98 271.00 861.50 275.00 C863.02 279.00 865.43 286.67 866.60 290.00 C867.77 293.33 867.73 292.67 868.50 295.00 C869.27 297.33 870.42 301.17 871.20 304.00 C871.98 306.83 872.65 309.17 873.20 312.00 C873.75 314.83 874.28 318.00 874.50 321.00 C874.72 324.00 874.50 326.00 874.50 330.00 C874.50 334.00 874.50 342.50 874.50 345.00" fill="none" stroke="#b02424" stroke-width="1.1" stroke-dasharray="5 3"/><line x1="25" y1="346.5" x2="903" y2="346.5" stroke="#e08ae0" stroke-width="1" stroke-dasharray="9 6 3 6"/><line x1="771.5" y1="56" x2="771.5" y2="365" stroke="#8c8c8c" stroke-width="1"/></g><rect x="29" y="370" width="1" height="2" fill="#000"/><rect x="28" y="372" width="3" height="4" fill="#000"/><rect x="27" y="376" width="5" height="2" fill="#000"/></svg>
<div style="position:absolute;left:10px;top:384px;width:906px;height:21px;box-sizing:border-box;border:1px solid #a9a9a9;background:#fff;"></div>
<div style="position:absolute;left:13.6px;top:389.00px;font-size:11px;line-height:11px;color:#000;font-weight:normal;letter-spacing:-0.06px;white-space:pre;transform:scaleY(1.12);transform-origin:0 9.000px;">Re=94828 /Gamma=0,0208 /ca=0,879   //Instabiler Flug</div>
<div style="position:absolute;left:545px;top:414px;width:70px;height:45px;box-sizing:border-box;border:1px solid #dcdcdc;"></div>
<div style="position:absolute;left:615px;top:414px;width:70px;height:45px;box-sizing:border-box;border:1px solid #dcdcdc;"></div>
<div style="position:absolute;left:685px;top:414px;width:60px;height:45px;box-sizing:border-box;border:1px solid #dcdcdc;"></div>
<div style="position:absolute;left:745px;top:414px;width:171px;height:45px;box-sizing:border-box;border:1px solid #dcdcdc;"></div>
<div style="position:absolute;left:10px;top:465px;width:76px;height:75px;box-sizing:border-box;border:1px solid #dcdcdc;"></div>
<div style="position:absolute;left:85px;top:465px;width:75px;height:35px;box-sizing:border-box;border:1px solid #dcdcdc;"></div>
<div style="position:absolute;left:85px;top:506px;width:75px;height:34px;box-sizing:border-box;border:1px solid #dcdcdc;"></div>
<div style="position:absolute;left:160px;top:465px;width:96px;height:75px;box-sizing:border-box;border:1px solid #dcdcdc;"></div>
<div style="position:absolute;left:255px;top:465px;width:66px;height:75px;box-sizing:border-box;border:1px solid #dcdcdc;"></div>
<div style="position:absolute;left:320px;top:465px;width:117px;height:75px;box-sizing:border-box;border:1px solid #dcdcdc;"></div>
<div style="position:absolute;left:436px;top:465px;width:158px;height:75px;box-sizing:border-box;border:1px solid #dcdcdc;"></div>
<div style="position:absolute;left:594px;top:465px;width:101px;height:75px;box-sizing:border-box;border:1px solid #dcdcdc;"></div>
<div style="position:absolute;left:694px;top:465px;width:222px;height:131px;box-sizing:border-box;border:1px solid #dcdcdc;"></div>
<div style="position:absolute;left:10px;top:546px;width:426px;height:50px;box-sizing:border-box;border:1px solid #dcdcdc;"></div>
<div style="position:absolute;left:435px;top:546px;width:260px;height:50px;box-sizing:border-box;border:1px solid #dcdcdc;"></div>
<div style="position:absolute;left:10px;top:409px;width:23px;height:23px;box-sizing:border-box;border:1px solid #7fa6d6;background:#cde4f7;"></div>
<div style="position:absolute;left:36px;top:409px;width:23px;height:23px;box-sizing:border-box;border:1px solid #adadad;background:linear-gradient(#f0f0f0,#e5e5e5);"></div>
<div style="position:absolute;left:62px;top:409px;width:23px;height:23px;box-sizing:border-box;border:1px solid #adadad;background:linear-gradient(#f0f0f0,#e5e5e5);"></div>
<div style="position:absolute;left:88px;top:409px;width:23px;height:23px;box-sizing:border-box;border:1px solid #adadad;background:linear-gradient(#f0f0f0,#e5e5e5);"></div>
<div style="position:absolute;left:118px;top:409px;width:23px;height:23px;box-sizing:border-box;border:1px solid #7fa6d6;background:#cde4f7;"></div>
<div style="position:absolute;left:144px;top:409px;width:23px;height:23px;box-sizing:border-box;border:1px solid #7fa6d6;background:#cde4f7;"></div>
<div style="position:absolute;left:170px;top:409px;width:23px;height:23px;box-sizing:border-box;border:1px solid #7fa6d6;background:#cde4f7;"></div>
<div style="position:absolute;left:196px;top:409px;width:23px;height:23px;box-sizing:border-box;border:1px solid #adadad;background:linear-gradient(#f0f0f0,#e5e5e5);"></div>
<div style="position:absolute;left:222px;top:409px;width:23px;height:23px;box-sizing:border-box;border:1px solid #7fa6d6;background:#cde4f7;"></div>
<div style="position:absolute;left:248px;top:409px;width:23px;height:23px;box-sizing:border-box;border:1px solid #adadad;background:linear-gradient(#f0f0f0,#e5e5e5);"></div>
<div style="position:absolute;left:274px;top:409px;width:23px;height:23px;box-sizing:border-box;border:1px solid #adadad;background:linear-gradient(#f0f0f0,#e5e5e5);"></div>
<div style="position:absolute;left:300px;top:409px;width:23px;height:23px;box-sizing:border-box;border:1px solid #adadad;background:linear-gradient(#f0f0f0,#e5e5e5);"></div>
<div style="position:absolute;left:326px;top:409px;width:23px;height:23px;box-sizing:border-box;border:1px solid #d9d9d9;background:#f0f0f0;"></div>
<div style="position:absolute;left:352px;top:409px;width:23px;height:23px;box-sizing:border-box;border:1px solid #d9d9d9;background:#f0f0f0;"></div>
<div style="position:absolute;left:381px;top:409px;width:53px;height:23px;box-sizing:border-box;border:1px solid #adadad;background:linear-gradient(#f0f0f0,#e5e5e5);"></div>
<div style="position:absolute;left:440px;top:409px;width:99px;height:23px;box-sizing:border-box;border:1px solid #adadad;background:linear-gradient(#f0f0f0,#e5e5e5);"></div>
<div style="position:absolute;left:10px;top:434px;width:23px;height:23px;box-sizing:border-box;border:1px solid #adadad;background:linear-gradient(#f0f0f0,#e5e5e5);"></div>
<div style="position:absolute;left:36px;top:434px;width:23px;height:23px;box-sizing:border-box;border:1px solid #adadad;background:linear-gradient(#f0f0f0,#e5e5e5);"></div>
<div style="position:absolute;left:62px;top:434px;width:23px;height:23px;box-sizing:border-box;border:1px solid #adadad;background:linear-gradient(#f0f0f0,#e5e5e5);"></div>
<div style="position:absolute;left:88px;top:434px;width:23px;height:23px;box-sizing:border-box;border:1px solid #adadad;background:linear-gradient(#f0f0f0,#e5e5e5);"></div>
<div style="position:absolute;left:118px;top:434px;width:23px;height:23px;box-sizing:border-box;border:1px solid #adadad;background:linear-gradient(#f0f0f0,#e5e5e5);"></div>
<div style="position:absolute;left:144px;top:434px;width:75px;height:23px;box-sizing:border-box;border:1px solid #adadad;background:linear-gradient(#f0f0f0,#e5e5e5);"></div>
<div style="position:absolute;left:222px;top:434px;width:23px;height:23px;box-sizing:border-box;border:1px solid #adadad;background:linear-gradient(#f0f0f0,#e5e5e5);"></div>
<div style="position:absolute;left:248px;top:434px;width:23px;height:23px;box-sizing:border-box;border:1px solid #d9d9d9;background:#f0f0f0;"></div>
<div style="position:absolute;left:274px;top:434px;width:23px;height:23px;box-sizing:border-box;border:1px solid #d9d9d9;background:#f0f0f0;"></div>
<div style="position:absolute;left:300px;top:434px;width:75px;height:23px;box-sizing:border-box;border:1px solid #d9d9d9;background:#f0f0f0;"></div>
<div style="position:absolute;left:381px;top:434px;width:53px;height:23px;box-sizing:border-box;border:1px solid #adadad;background:linear-gradient(#f0f0f0,#e5e5e5);"></div>
<svg style="position:absolute;left:0;top:0" width="925" height="605"><path d="M22.5 415 L14 420.5 L14 424 L31 424 L31 420.5 Z" fill="#f0007a"/><rect x="14" y="421.5" width="5" height="2.5" fill="#1010c0"/><rect x="26" y="421.5" width="5" height="2.5" fill="#1010c0"/><rect x="21.5" y="413" width="1.5" height="2.5" fill="#1010c0"/><rect x="21.5" y="424" width="1.5" height="2" fill="#1010c0"/><rect x="13" y="437" width="16" height="19" fill="#ffe0e0"/><rect x="14" y="437" width="1.5" height="19" fill="#b82020"/><rect x="17" y="437" width="1.5" height="19" fill="#b82020"/><rect x="20" y="437" width="1.5" height="19" fill="#b82020"/><rect x="23" y="437" width="1.5" height="19" fill="#b82020"/><rect x="26" y="437" width="1.5" height="19" fill="#b82020"/><path d="M53.2 452.5 L53.2 446 C53.2 439.5 45.5 438.5 42.5 443.5" fill="none" stroke="#e00000" stroke-width="2.5"/><path d="M39 440 L39.5 449 L47 446.5 Z" fill="#e00000"/><path d="M121 429.5 L124 429.5 C126 429.5 127 423 129.5 423 C132 423 133 429.5 135 429.5 L138 429.5" fill="none" stroke="#000080" stroke-width="1.3"/><path d="M147 429.5 L150 429.5 C152 429.5 153 423 155.5 423 C158 423 159 429.5 161 429.5 L164 429.5" fill="none" stroke="#b00010" stroke-width="1.3"/><path d="M225 429.5 L228 429.5 C230 429.5 231 423 233.5 423 C236 423 237 429.5 239 429.5 L242 429.5" fill="none" stroke="#007000" stroke-width="1.3"/><path d="M251 429.5 L254 429.5 C256 429.5 257 423 259.5 423 C262 423 263 429.5 265 429.5 L268 429.5" fill="none" stroke="#40d8d8" stroke-width="1.3"/><path d="M277 429.5 L280 429.5 C282 429.5 283 423 285.5 423 C288 423 289 429.5 291 429.5 L294 429.5" fill="none" stroke="#800000" stroke-width="1.3"/><path d="M303 429.5 L306 429.5 C308 429.5 309 423 311.5 423 C314 423 315 429.5 317 429.5 L320 429.5" fill="none" stroke="#800080" stroke-width="1.3"/><path d="M329 429.5 L332 429.5 C334 429.5 335 423 337.5 423 C340 423 341 429.5 343 429.5 L346 429.5" fill="none" stroke="#a8a8a8" stroke-width="1.3"/><path d="M355 429.5 L358 429.5 C360 429.5 361 423 363.5 423 C366 423 367 429.5 369 429.5 L372 429.5" fill="none" stroke="#a8a8a8" stroke-width="1.3"/><line x1="123" y1="437" x2="123" y2="455.5" stroke="#0000a0" stroke-width="1.4"/><line x1="120.5" y1="447.5" x2="136" y2="447.5" stroke="#0000a0" stroke-width="1.2"/><line x1="121.5" y1="438" x2="124.5" y2="438" stroke="#0000a0" stroke-width="1"/><line x1="121.5" y1="440.5" x2="124.5" y2="440.5" stroke="#0000a0" stroke-width="1"/><line x1="121.5" y1="443" x2="124.5" y2="443" stroke="#0000a0" stroke-width="1"/><line x1="121.5" y1="445.5" x2="124.5" y2="445.5" stroke="#0000a0" stroke-width="1"/><line x1="121.5" y1="450" x2="124.5" y2="450" stroke="#0000a0" stroke-width="1"/><line x1="121.5" y1="452.5" x2="124.5" y2="452.5" stroke="#0000a0" stroke-width="1"/><line x1="121.5" y1="455" x2="124.5" y2="455" stroke="#0000a0" stroke-width="1"/><line x1="127" y1="446" x2="127" y2="449" stroke="#0000a0" stroke-width="1"/><line x1="130" y1="446" x2="130" y2="449" stroke="#0000a0" stroke-width="1"/><line x1="133" y1="446" x2="133" y2="449" stroke="#0000a0" stroke-width="1"/><line x1="175" y1="437" x2="175" y2="455.5" stroke="#c00000" stroke-width="1.4"/><line x1="172.5" y1="447.5" x2="188" y2="447.5" stroke="#c00000" stroke-width="1.2"/><line x1="173.5" y1="438" x2="176.5" y2="438" stroke="#c00000" stroke-width="1"/><line x1="173.5" y1="440.5" x2="176.5" y2="440.5" stroke="#c00000" stroke-width="1"/><line x1="173.5" y1="443" x2="176.5" y2="443" stroke="#c00000" stroke-width="1"/><line x1="173.5" y1="445.5" x2="176.5" y2="445.5" stroke="#c00000" stroke-width="1"/><line x1="173.5" y1="450" x2="176.5" y2="450" stroke="#c00000" stroke-width="1"/><line x1="173.5" y1="452.5" x2="176.5" y2="452.5" stroke="#c00000" stroke-width="1"/><line x1="173.5" y1="455" x2="176.5" y2="455" stroke="#c00000" stroke-width="1"/><line x1="179" y1="446" x2="179" y2="449" stroke="#c00000" stroke-width="1"/><line x1="182" y1="446" x2="182" y2="449" stroke="#c00000" stroke-width="1"/><line x1="185" y1="446" x2="185" y2="449" stroke="#c00000" stroke-width="1"/><line x1="226.5" y1="437" x2="226.5" y2="455.5" stroke="#008000" stroke-width="1.4"/><line x1="224.0" y1="447.5" x2="239.5" y2="447.5" stroke="#008000" stroke-width="1.2"/><line x1="225.0" y1="438" x2="228.0" y2="438" stroke="#008000" stroke-width="1"/><line x1="225.0" y1="440.5" x2="228.0" y2="440.5" stroke="#008000" stroke-width="1"/><line x1="225.0" y1="443" x2="228.0" y2="443" stroke="#008000" stroke-width="1"/><line x1="225.0" y1="445.5" x2="228.0" y2="445.5" stroke="#008000" stroke-width="1"/><line x1="225.0" y1="450" x2="228.0" y2="450" stroke="#008000" stroke-width="1"/><line x1="225.0" y1="452.5" x2="228.0" y2="452.5" stroke="#008000" stroke-width="1"/><line x1="225.0" y1="455" x2="228.0" y2="455" stroke="#008000" stroke-width="1"/><line x1="230.5" y1="446" x2="230.5" y2="449" stroke="#008000" stroke-width="1"/><line x1="233.5" y1="446" x2="233.5" y2="449" stroke="#008000" stroke-width="1"/><line x1="236.5" y1="446" x2="236.5" y2="449" stroke="#008000" stroke-width="1"/><line x1="252.5" y1="437" x2="252.5" y2="455.5" stroke="#a8a8a8" stroke-width="1.4"/><line x1="250.0" y1="447.5" x2="265.5" y2="447.5" stroke="#a8a8a8" stroke-width="1.2"/><line x1="251.0" y1="438" x2="254.0" y2="438" stroke="#a8a8a8" stroke-width="1"/><line x1="251.0" y1="440.5" x2="254.0" y2="440.5" stroke="#a8a8a8" stroke-width="1"/><line x1="251.0" y1="443" x2="254.0" y2="443" stroke="#a8a8a8" stroke-width="1"/><line x1="251.0" y1="445.5" x2="254.0" y2="445.5" stroke="#a8a8a8" stroke-width="1"/><line x1="251.0" y1="450" x2="254.0" y2="450" stroke="#a8a8a8" stroke-width="1"/><line x1="251.0" y1="452.5" x2="254.0" y2="452.5" stroke="#a8a8a8" stroke-width="1"/><line x1="251.0" y1="455" x2="254.0" y2="455" stroke="#a8a8a8" stroke-width="1"/><line x1="256.5" y1="446" x2="256.5" y2="449" stroke="#a8a8a8" stroke-width="1"/><line x1="259.5" y1="446" x2="259.5" y2="449" stroke="#a8a8a8" stroke-width="1"/><line x1="262.5" y1="446" x2="262.5" y2="449" stroke="#a8a8a8" stroke-width="1"/><line x1="278.5" y1="437" x2="278.5" y2="455.5" stroke="#a8a8a8" stroke-width="1.4"/><line x1="276.0" y1="447.5" x2="291.5" y2="447.5" stroke="#a8a8a8" stroke-width="1.2"/><line x1="277.0" y1="438" x2="280.0" y2="438" stroke="#a8a8a8" stroke-width="1"/><line x1="277.0" y1="440.5" x2="280.0" y2="440.5" stroke="#a8a8a8" stroke-width="1"/><line x1="277.0" y1="443" x2="280.0" y2="443" stroke="#a8a8a8" stroke-width="1"/><line x1="277.0" y1="445.5" x2="280.0" y2="445.5" stroke="#a8a8a8" stroke-width="1"/><line x1="277.0" y1="450" x2="280.0" y2="450" stroke="#a8a8a8" stroke-width="1"/><line x1="277.0" y1="452.5" x2="280.0" y2="452.5" stroke="#a8a8a8" stroke-width="1"/><line x1="277.0" y1="455" x2="280.0" y2="455" stroke="#a8a8a8" stroke-width="1"/><line x1="282.5" y1="446" x2="282.5" y2="449" stroke="#a8a8a8" stroke-width="1"/><line x1="285.5" y1="446" x2="285.5" y2="449" stroke="#a8a8a8" stroke-width="1"/><line x1="288.5" y1="446" x2="288.5" y2="449" stroke="#a8a8a8" stroke-width="1"/><line x1="330.5" y1="437" x2="330.5" y2="455.5" stroke="#a8a8a8" stroke-width="1.4"/><line x1="328.0" y1="447.5" x2="343.5" y2="447.5" stroke="#a8a8a8" stroke-width="1.2"/><line x1="329.0" y1="438" x2="332.0" y2="438" stroke="#a8a8a8" stroke-width="1"/><line x1="329.0" y1="440.5" x2="332.0" y2="440.5" stroke="#a8a8a8" stroke-width="1"/><line x1="329.0" y1="443" x2="332.0" y2="443" stroke="#a8a8a8" stroke-width="1"/><line x1="329.0" y1="445.5" x2="332.0" y2="445.5" stroke="#a8a8a8" stroke-width="1"/><line x1="329.0" y1="450" x2="332.0" y2="450" stroke="#a8a8a8" stroke-width="1"/><line x1="329.0" y1="452.5" x2="332.0" y2="452.5" stroke="#a8a8a8" stroke-width="1"/><line x1="329.0" y1="455" x2="332.0" y2="455" stroke="#a8a8a8" stroke-width="1"/><line x1="334.5" y1="446" x2="334.5" y2="449" stroke="#a8a8a8" stroke-width="1"/><line x1="337.5" y1="446" x2="337.5" y2="449" stroke="#a8a8a8" stroke-width="1"/><line x1="340.5" y1="446" x2="340.5" y2="449" stroke="#a8a8a8" stroke-width="1"/><path d="M384.6 444.6 C384.6 441.3 386.6 439.6 390 439.6 L401.5 439.6 L431 450.2 L425 451.6 L398 451.6 C392 451 384.8 448 384.6 444.6 Z" fill="none" stroke="#000" stroke-width="1.2"/><path d="M385 444.8 L398 445.6 L418 447.6 L431 450.2 M418.5 447.8 L420 450.8 M423.5 448.6 L425.5 451" fill="none" stroke="#000" stroke-width="1.1"/></svg>
<div style="position:absolute;left:38.5px;top:415.00px;font-size:13px;line-height:13px;color:#000;font-weight:bold;letter-spacing:-0.2px;white-space:pre;transform:scaleY(1.1);transform-origin:0 11.000px;">XC</div>
<div style="position:absolute;left:64px;top:415.00px;font-size:13px;line-height:13px;color:#000;font-weight:bold;letter-spacing:-0.2px;white-space:pre;transform:scaleY(1.1);transform-origin:0 11.000px;">XN</div>
<div style="position:absolute;left:91.8px;top:415.00px;font-size:13px;line-height:13px;color:#000;font-weight:bold;letter-spacing:-0.2px;white-space:pre;transform:scaleY(1.1);transform-origin:0 11.000px;">xd</div>
<div style="position:absolute;left:64px;top:440.00px;font-size:13px;line-height:13px;color:#000;font-weight:bold;letter-spacing:-0.2px;white-space:pre;transform:scaleY(1.1);transform-origin:0 11.000px;">XE</div>
<div style="position:absolute;left:89.5px;top:440.00px;font-size:13px;line-height:13px;color:#000;font-weight:bold;letter-spacing:-0.2px;white-space:pre;transform:scaleY(1.1);transform-origin:0 11.000px;">XD</div>
<svg style="position:absolute;left:0;top:0" width="925" height="605"><path d="M125.6 421 L125.6 412.6 L128 412.6 Q129.2 412.6 129.2 413.8 L129.2 415.4 Q129.2 416.6 128 416.6 L125.6 416.6 M127.6 416.6 L129.2 421 M135.2 412.6 L131.8 412.6 L131.8 420.3 L135.2 420.3 M131.8 416.4 L134.8 416.4" fill="none" stroke="#000080" stroke-width="1.4"/></svg>
<svg style="position:absolute;left:0;top:0" width="925" height="605"><path d="M149.8 413.8 L151.8 412.4 L153.6 412.9 L155 415.8 L156.8 414 L157.8 412.8" fill="none" stroke="#e00000" stroke-width="1.4"/><path d="M157.9 411.8 L158.2 413.6 L159.9 413.6 L160 411.8" fill="none" stroke="#e00000" stroke-width="1.2"/><path d="M154.7 415.3 L154.4 420.8" fill="none" stroke="#c00000" stroke-width="2.2"/><path d="M175.8 413.8 L177.8 412.4 L179.6 412.9 L181 415.8 L182.8 414 L183.8 412.8" fill="none" stroke="#e00000" stroke-width="1.4"/><path d="M183.9 411.8 L184.2 413.6 L185.9 413.6 L186 411.8" fill="none" stroke="#e00000" stroke-width="1.2"/><path d="M180.7 415.3 L180.4 420.8" fill="none" stroke="#c00000" stroke-width="2.2"/><path d="M201.8 413.8 L203.8 412.4 L205.6 412.9 L207 415.8 L208.8 414 L209.8 412.8" fill="none" stroke="#e00000" stroke-width="1.4"/><path d="M209.9 411.8 L210.2 413.6 L211.9 413.6 L212 411.8" fill="none" stroke="#e00000" stroke-width="1.2"/><path d="M206.7 415.3 L206.4 420.8" fill="none" stroke="#c00000" stroke-width="2.2"/><path d="M177.5 423.5 L181.3 430.5 L185 423.5" fill="none" stroke="#000" stroke-width="1.8"/><rect x="203.7" y="423" width="3.6" height="7" fill="none" stroke="#000" stroke-width="1.5"/></svg>
<div style="position:absolute;left:227.7px;top:412.54px;font-size:10px;line-height:10px;color:#007000;font-weight:normal;letter-spacing:0px;white-space:pre;font-family:"Liberation Mono",monospace;letter-spacing:0px;">ca</div>
<div style="position:absolute;left:249.5px;top:412.54px;font-size:10px;line-height:10px;color:#40d8d8;font-weight:normal;letter-spacing:0px;white-space:pre;font-family:"Liberation Mono",monospace;letter-spacing:1.5px;">cm</div>
<div style="position:absolute;left:278px;top:412.54px;font-size:10px;line-height:10px;color:#800000;font-weight:normal;letter-spacing:0px;white-space:pre;font-family:"Liberation Mono",monospace;letter-spacing:0px;">ai</div>
<div style="position:absolute;left:302.5px;top:412.54px;font-size:10px;line-height:10px;color:#800080;font-weight:normal;letter-spacing:0px;white-space:pre;font-family:"Liberation Mono",monospace;letter-spacing:-0.4px;">cwi</div>
<div style="position:absolute;left:328.5px;top:412.54px;font-size:10px;line-height:10px;color:#a8a8a8;font-weight:normal;letter-spacing:0px;white-space:pre;font-family:"Liberation Mono",monospace;letter-spacing:0.3px;">cwp</div>
<div style="position:absolute;left:354.5px;top:412.54px;font-size:10px;line-height:10px;color:#a8a8a8;font-weight:normal;letter-spacing:0px;white-space:pre;font-family:"Liberation Mono",monospace;letter-spacing:0.3px;">cwg</div>
<div style="position:absolute;left:399.8px;top:415.00px;font-size:13px;line-height:13px;color:#000;font-weight:bold;letter-spacing:0px;white-space:pre;transform:scaleY(1.1);transform-origin:0 11.000px;">3D</div>
<div style="position:absolute;left:446.3px;top:416.00px;font-size:11px;line-height:11px;color:#000;font-weight:normal;letter-spacing:-0.1px;white-space:pre;transform:scaleY(1.12);transform-origin:0 9.000px;">Berechnete Werte</div>
<div style="position:absolute;left:444px;top:441px;width:13px;height:13px;box-sizing:border-box;border:1px solid #333;background:#fff;"></div>
<div style="position:absolute;left:460.5px;top:443.00px;font-size:11px;line-height:11px;color:#000;font-weight:normal;letter-spacing:-0.1px;white-space:pre;transform:scaleY(1.12);transform-origin:0 9.000px;">nicht rechnen</div>
<div style="position:absolute;left:553.8px;top:410.00px;font-size:11px;line-height:11px;color:#000;font-weight:normal;letter-spacing:-0.4px;white-space:pre;transform:scaleY(1.12);transform-origin:0 9.000px;background:#f0f0f0;padding:0 1px;margin-left:-1px;">Masse</div>
<div style="position:absolute;left:551px;top:425px;width:45px;height:21px;box-sizing:border-box;border:1px solid #abadb3;background:#fff;"></div>
<div style="position:absolute;left:555px;top:430.00px;font-size:11px;line-height:11px;color:#000;font-weight:normal;letter-spacing:-0.2px;white-space:pre;transform:scaleY(1.12);transform-origin:0 9.000px;">2,5</div>
<div style="position:absolute;left:600px;top:430.00px;font-size:11px;line-height:11px;color:#000;font-weight:normal;letter-spacing:0px;white-space:pre;transform:scaleY(1.12);transform-origin:0 9.000px;">kg</div>
<div style="position:absolute;left:624px;top:410.00px;font-size:11px;line-height:11px;color:#000;font-weight:normal;letter-spacing:-0.34px;white-space:pre;transform:scaleY(1.12);transform-origin:0 9.000px;background:#f0f0f0;padding:0 1px;margin-left:-1px;">Flughöhe</div>
<div style="position:absolute;left:621px;top:425px;width:45px;height:21px;box-sizing:border-box;border:1px solid #abadb3;background:#fff;"></div>
<div style="position:absolute;left:625px;top:430.00px;font-size:11px;line-height:11px;color:#000;font-weight:normal;letter-spacing:-0.2px;white-space:pre;transform:scaleY(1.12);transform-origin:0 9.000px;">0</div>
<div style="position:absolute;left:670.6px;top:430.00px;font-size:11px;line-height:11px;color:#000;font-weight:normal;letter-spacing:0px;white-space:pre;transform:scaleY(1.12);transform-origin:0 9.000px;">m</div>
<div style="position:absolute;left:693.8px;top:410.00px;font-size:11px;line-height:11px;color:#000;font-weight:normal;letter-spacing:-0.3px;white-space:pre;transform:scaleY(1.12);transform-origin:0 9.000px;background:#f0f0f0;padding:0 1px;margin-left:-1px;">Wirbelzahl</div>
<div style="position:absolute;left:690px;top:425px;width:51px;height:21px;box-sizing:border-box;border:1px solid #abadb3;background:#fff;"></div>
<div style="position:absolute;left:694px;top:430.00px;font-size:11px;line-height:11px;color:#000;font-weight:normal;letter-spacing:-0.2px;white-space:pre;transform:scaleY(1.12);transform-origin:0 9.000px;">127</div>
<svg style="position:absolute;left:727.5px;top:432px" width="10" height="9"><path d="M1.8 2.3 L5 6.6 L8.2 2.3" fill="none" stroke="#444" stroke-width="2.3"/></svg>
<div style="position:absolute;left:753.6px;top:410.00px;font-size:11px;line-height:11px;color:#000;font-weight:normal;letter-spacing:-0.24px;white-space:pre;transform:scaleY(1.12);transform-origin:0 9.000px;background:#f0f0f0;padding:0 1px;margin-left:-1px;">Oberfläche</div>
<div style="position:absolute;left:750px;top:425px;width:162px;height:21px;box-sizing:border-box;border:1px solid #acacac;background:linear-gradient(#f2f2f2,#e4e4e4);"></div>
<div style="position:absolute;left:754px;top:430.00px;font-size:11px;line-height:11px;color:#000;font-weight:normal;letter-spacing:-0.31px;white-space:pre;transform:scaleY(1.12);transform-origin:0 9.000px;">Sauberer Flügel</div>
<svg style="position:absolute;left:898.5px;top:432px" width="10" height="9"><path d="M1.8 2.3 L5 6.6 L8.2 2.3" fill="none" stroke="#444" stroke-width="2.3"/></svg>
<div style="position:absolute;left:17.5px;top:461.00px;font-size:11px;line-height:11px;color:#000;font-weight:normal;letter-spacing:-0.15px;white-space:pre;transform:scaleY(1.12);transform-origin:0 9.000px;background:#f0f0f0;padding:0 1px;margin-left:-1px;">Balkenpos. Y</div>
<div style="position:absolute;left:15px;top:473px;width:48px;height:21px;box-sizing:border-box;border:1px solid #abadb3;background:#fff;"></div>
<div style="position:absolute;left:19px;top:478.00px;font-size:11px;line-height:11px;color:#000;font-weight:normal;letter-spacing:-0.2px;white-space:pre;transform:scaleY(1.12);transform-origin:0 9.000px;">0,95</div>
<div style="position:absolute;left:65.5px;top:478.00px;font-size:11px;line-height:11px;color:#000;font-weight:normal;letter-spacing:0px;white-space:pre;transform:scaleY(1.12);transform-origin:0 9.000px;">(m)</div>
<div style="position:absolute;left:16px;top:498px;width:28px;height:18px;box-sizing:border-box;border:1px solid #adadad;background:linear-gradient(#f0f0f0,#e5e5e5);"></div>
<div style="position:absolute;left:47px;top:498px;width:28px;height:18px;box-sizing:border-box;border:1px solid #adadad;background:linear-gradient(#f0f0f0,#e5e5e5);"></div>
<div style="position:absolute;left:16px;top:519px;width:28px;height:18px;box-sizing:border-box;border:1px solid #adadad;background:linear-gradient(#f0f0f0,#e5e5e5);"></div>
<div style="position:absolute;left:47px;top:519px;width:28px;height:18px;box-sizing:border-box;border:1px solid #adadad;background:linear-gradient(#f0f0f0,#e5e5e5);"></div>
<svg style="position:absolute;left:0;top:0" width="925" height="605"><path d="M34 503.3 L25.3 507.5 L34 511.7 M56 503.3 L64.7 507.5 L56 511.7" fill="none" stroke="#000" stroke-width="1.7"/><rect x="27.6" y="528.6" width="5.3" height="2.6" fill="#000"/><path d="M56 529 L65.2 529 M60.5 524 L60.5 534" stroke="#000" stroke-width="2"/></svg>
<div style="position:absolute;left:93.2px;top:461.00px;font-size:11px;line-height:11px;color:#000;font-weight:normal;letter-spacing:-0.28px;white-space:pre;transform:scaleY(1.12);transform-origin:0 9.000px;background:#f0f0f0;padding:0 1px;margin-left:-1px;">X-Koordinate</div>
<div style="position:absolute;left:91px;top:474px;width:48px;height:21px;box-sizing:border-box;border:1px solid #abadb3;background:#fff;"></div>
<div style="position:absolute;left:95px;top:479.00px;font-size:11px;line-height:11px;color:#000;font-weight:normal;letter-spacing:-0.2px;white-space:pre;transform:scaleY(1.12);transform-origin:0 9.000px;">0,0098</div>
<div style="position:absolute;left:143.4px;top:479.00px;font-size:11px;line-height:11px;color:#000;font-weight:normal;letter-spacing:0px;white-space:pre;transform:scaleY(1.12);transform-origin:0 9.000px;">m</div>
<div style="position:absolute;left:93.6px;top:502.00px;font-size:11px;line-height:11px;color:#000;font-weight:normal;letter-spacing:-0.24px;white-space:pre;transform:scaleY(1.12);transform-origin:0 9.000px;background:#f0f0f0;padding:0 1px;margin-left:-1px;">Eingaben</div>
<div style="position:absolute;left:90px;top:515px;width:65px;height:21px;box-sizing:border-box;border:1px solid #acacac;background:linear-gradient(#f2f2f2,#e4e4e4);"></div>
<div style="position:absolute;left:94px;top:520.00px;font-size:11px;line-height:11px;color:#000;font-weight:normal;letter-spacing:-0.6px;white-space:pre;transform:scaleY(1.12);transform-origin:0 9.000px;">symmetri</div>
<svg style="position:absolute;left:141.5px;top:522px" width="10" height="9"><path d="M1.8 2.3 L5 6.6 L8.2 2.3" fill="none" stroke="#444" stroke-width="2.3"/></svg>
<div style="position:absolute;left:168.2px;top:461.00px;font-size:11px;line-height:11px;color:#000;font-weight:normal;letter-spacing:-0.1px;white-space:pre;transform:scaleY(1.12);transform-origin:0 9.000px;background:#f0f0f0;padding:0 1px;margin-left:-1px;">Pfeilwinkel (Grad)</div>
<div style="position:absolute;left:175.2px;top:473.00px;font-size:11px;line-height:11px;color:#000;font-weight:normal;letter-spacing:-0.28px;white-space:pre;transform:scaleY(1.12);transform-origin:0 9.000px;">links</div>
<div style="position:absolute;left:214.7px;top:473.00px;font-size:11px;line-height:11px;color:#000;font-weight:normal;letter-spacing:0px;white-space:pre;transform:scaleY(1.12);transform-origin:0 9.000px;">rechts</div>
<div style="position:absolute;left:166px;top:488px;width:40px;height:21px;box-sizing:border-box;border:1px solid #abadb3;background:#fff;"></div>
<div style="position:absolute;left:170px;top:493.00px;font-size:11px;line-height:11px;color:#000;font-weight:normal;letter-spacing:-0.2px;white-space:pre;transform:scaleY(1.12);transform-origin:0 9.000px;">-3,2</div>
<div style="position:absolute;left:210px;top:488px;width:40px;height:21px;box-sizing:border-box;border:1px solid #abadb3;background:#fff;"></div>
<div style="position:absolute;left:214px;top:493.00px;font-size:11px;line-height:11px;color:#000;font-weight:normal;letter-spacing:-0.2px;white-space:pre;transform:scaleY(1.12);transform-origin:0 9.000px;">4,9</div>
<div style="position:absolute;left:170.6px;top:518.00px;font-size:11px;line-height:11px;color:#000;font-weight:normal;letter-spacing:0px;white-space:pre;transform:scaleY(1.12);transform-origin:0 9.000px;">bei</div>
<div style="position:absolute;left:188px;top:512px;width:45px;height:22px;box-sizing:border-box;border:1px solid #abadb3;background:#fff;"></div>
<div style="position:absolute;left:192px;top:517.00px;font-size:11px;line-height:11px;color:#000;font-weight:normal;letter-spacing:-0.2px;white-space:pre;transform:scaleY(1.12);transform-origin:0 9.000px;">0</div>
<svg style="position:absolute;left:219.5px;top:519px" width="10" height="9"><path d="M1.8 2.3 L5 6.6 L8.2 2.3" fill="none" stroke="#444" stroke-width="2.3"/></svg>
<div style="position:absolute;left:235.9px;top:518.00px;font-size:11px;line-height:11px;color:#000;font-weight:normal;letter-spacing:0px;white-space:pre;transform:scaleY(1.12);transform-origin:0 9.000px;">%</div>
<div style="position:absolute;left:264.4px;top:461.00px;font-size:11px;line-height:11px;color:#000;font-weight:normal;letter-spacing:-0.41px;white-space:pre;transform:scaleY(1.12);transform-origin:0 9.000px;background:#f0f0f0;padding:0 1px;margin-left:-1px;">Tiefe (m)</div>
<div style="position:absolute;left:263px;top:474px;width:48px;height:21px;box-sizing:border-box;border:1px solid #abadb3;background:#fff;"></div>
<div style="position:absolute;left:267px;top:479.00px;font-size:11px;line-height:11px;color:#000;font-weight:normal;letter-spacing:-0.2px;white-space:pre;transform:scaleY(1.12);transform-origin:0 9.000px;">0,12</div>
<div style="position:absolute;left:265.3px;top:501.00px;font-size:11px;line-height:11px;color:#000;font-weight:normal;letter-spacing:-0.25px;white-space:pre;transform:scaleY(1.12);transform-origin:0 9.000px;">Bezug</div>
<div style="position:absolute;left:261px;top:512px;width:41px;height:21px;box-sizing:border-box;border:1px solid #abadb3;background:#fff;"></div>
<div style="position:absolute;left:265px;top:517.00px;font-size:11px;line-height:11px;color:#000;font-weight:normal;letter-spacing:-0.2px;white-space:pre;transform:scaleY(1.12);transform-origin:0 9.000px;">0</div>
<svg style="position:absolute;left:288.5px;top:519px" width="10" height="9"><path d="M1.8 2.3 L5 6.6 L8.2 2.3" fill="none" stroke="#444" stroke-width="2.3"/></svg>
<div style="position:absolute;left:305.7px;top:517.00px;font-size:11px;line-height:11px;color:#000;font-weight:normal;letter-spacing:0px;white-space:pre;transform:scaleY(1.12);transform-origin:0 9.000px;">%</div>
<div style="position:absolute;left:328.3px;top:461.00px;font-size:11px;line-height:11px;color:#000;font-weight:normal;letter-spacing:-0.25px;white-space:pre;transform:scaleY(1.12);transform-origin:0 9.000px;background:#f0f0f0;padding:0 1px;margin-left:-1px;">Verwindung (Grad)</div>
<div style="position:absolute;left:326px;top:474px;width:45px;height:21px;box-sizing:border-box;border:1px solid #abadb3;background:#fff;"></div>
<div style="position:absolute;left:330px;top:479.00px;font-size:11px;line-height:11px;color:#000;font-weight:normal;letter-spacing:-0.2px;white-space:pre;transform:scaleY(1.12);transform-origin:0 9.000px;">0</div>
<div style="position:absolute;left:382.8px;top:475.00px;font-size:11px;line-height:11px;color:#000;font-weight:normal;letter-spacing:0px;white-space:pre;transform:scaleY(1.12);transform-origin:0 9.000px;">Rücklage</div>
<div style="position:absolute;left:380px;top:489px;width:41px;height:21px;box-sizing:border-box;border:1px solid #abadb3;background:#fff;"></div>
<div style="position:absolute;left:384px;top:494.00px;font-size:11px;line-height:11px;color:#000;font-weight:normal;letter-spacing:-0.2px;white-space:pre;transform:scaleY(1.12);transform-origin:0 9.000px;">75</div>
<svg style="position:absolute;left:407.5px;top:496px" width="10" height="9"><path d="M1.8 2.3 L5 6.6 L8.2 2.3" fill="none" stroke="#444" stroke-width="2.3"/></svg>
<div style="position:absolute;left:422.8px;top:495.00px;font-size:11px;line-height:11px;color:#000;font-weight:normal;letter-spacing:0px;white-space:pre;transform:scaleY(1.12);transform-origin:0 9.000px;">%</div>
<div style="position:absolute;left:327px;top:497px;width:39px;height:16px;box-sizing:border-box;border:1px solid #adadad;background:linear-gradient(#f0f0f0,#e5e5e5);"></div>
<div style="position:absolute;left:333px;top:500.00px;font-size:11px;line-height:11px;color:#000;font-weight:normal;letter-spacing:-0.1px;white-space:pre;transform:scaleY(1.12);transform-origin:0 9.000px;">Profil</div>
<div style="position:absolute;left:329px;top:515px;width:96px;height:20px;box-sizing:border-box;border:1px solid #abadb3;background:#fff;"></div>
<div style="position:absolute;left:330px;top:516px;width:93px;height:18px;overflow:hidden;">
<div style="position:absolute;left:3px;top:5.00px;font-size:11px;line-height:11px;color:#000;font-weight:normal;letter-spacing:-0.2px;white-space:pre;transform:scaleY(1.12);transform-origin:0 9.000px;">4-PWUH WhisperM</div>
</div>
<div style="position:absolute;left:443.8px;top:461.00px;font-size:11px;line-height:11px;color:#000;font-weight:normal;letter-spacing:-0.31px;white-space:pre;transform:scaleY(1.12);transform-origin:0 9.000px;background:#f0f0f0;padding:0 1px;margin-left:-1px;">Spannweite (m)</div>
<div style="position:absolute;left:441px;top:474px;width:48px;height:21px;box-sizing:border-box;border:1px solid #abadb3;background:#fff;"></div>
<div style="position:absolute;left:445px;top:479.00px;font-size:11px;line-height:11px;color:#000;font-weight:normal;letter-spacing:-0.2px;white-space:pre;transform:scaleY(1.12);transform-origin:0 9.000px;">2,54</div>
<div style="position:absolute;left:442px;top:499.00px;font-size:11px;line-height:11px;color:#000;font-weight:normal;letter-spacing:-0.23px;white-space:pre;transform:scaleY(1.12);transform-origin:0 9.000px;">Bedingung</div>
<div style="position:absolute;left:440px;top:514px;width:148px;height:22px;box-sizing:border-box;border:1px solid #acacac;background:linear-gradient(#f2f2f2,#e4e4e4);"></div>
<div style="position:absolute;left:444px;top:519.00px;font-size:11px;line-height:11px;color:#000;font-weight:normal;letter-spacing:-0.2px;white-space:pre;transform:scaleY(1.12);transform-origin:0 9.000px;">Varia</div>
<svg style="position:absolute;left:574.5px;top:521px" width="10" height="9"><path d="M1.8 2.3 L5 6.6 L8.2 2.3" fill="none" stroke="#444" stroke-width="2.3"/></svg>
<div style="position:absolute;left:602.4px;top:461.00px;font-size:11px;line-height:11px;color:#000;font-weight:normal;letter-spacing:-0.26px;white-space:pre;transform:scaleY(1.12);transform-origin:0 9.000px;background:#f0f0f0;padding:0 1px;margin-left:-1px;">Profilwiderstand</div>
<div style="position:absolute;left:604px;top:478px;width:73px;height:18px;box-sizing:border-box;border:1px solid #adadad;background:linear-gradient(#f0f0f0,#e5e5e5);"></div>
<div style="position:absolute;left:622.5px;top:482.00px;font-size:11px;line-height:11px;color:#000;font-weight:normal;letter-spacing:-0.37px;white-space:pre;transform:scaleY(1.12);transform-origin:0 9.000px;">manuell</div>
<div style="position:absolute;left:602px;top:504px;width:13px;height:13px;box-sizing:border-box;border:1px solid #333;background:#fff;"></div>
<div style="position:absolute;left:619px;top:507.00px;font-size:11px;line-height:11px;color:#000;font-weight:normal;letter-spacing:-0.26px;white-space:pre;transform:scaleY(1.12);transform-origin:0 9.000px;">automatisch</div>
<div style="position:absolute;left:602px;top:522px;width:13px;height:13px;box-sizing:border-box;border:1px solid #333;background:#fff;"></div>
<svg style="position:absolute;left:602px;top:522px" width="13" height="13"><path d="M2.5 6.5 L5 9.5 L10.5 3" fill="none" stroke="#000" stroke-width="1.8"/></svg>
<div style="position:absolute;left:619px;top:525.00px;font-size:11px;line-height:11px;color:#000;font-weight:normal;letter-spacing:-0.35px;white-space:pre;transform:scaleY(1.12);transform-origin:0 9.000px;">mit Blasenber.</div>
<div style="position:absolute;left:702.1px;top:461.00px;font-size:11px;line-height:11px;color:#000;font-weight:normal;letter-spacing:-0.23px;white-space:pre;transform:scaleY(1.12);transform-origin:0 9.000px;background:#f0f0f0;padding:0 1px;margin-left:-1px;">Auslegungseinstellungen</div>
<svg style="position:absolute;left:700px;top:481px" width="14" height="14"><circle cx="7" cy="7" r="6" fill="#fff" stroke="#333" stroke-width="1"/></svg>
<div style="position:absolute;left:720px;top:477px;width:50px;height:21px;box-sizing:border-box;border:1px solid #abadb3;background:#fff;"></div>
<div style="position:absolute;left:724px;top:482.00px;font-size:11px;line-height:11px;color:#000;font-weight:normal;letter-spacing:-0.2px;white-space:pre;transform:scaleY(1.12);transform-origin:0 9.000px;">7,783</div>
<div style="position:absolute;left:774.5px;top:482.00px;font-size:11px;line-height:11px;color:#000;font-weight:normal;letter-spacing:-0.26px;white-space:pre;transform:scaleY(1.12);transform-origin:0 9.000px;">Flügel-Anstellwinkel in Grad</div>
<svg style="position:absolute;left:700px;top:503px" width="14" height="14"><circle cx="7" cy="7" r="6" fill="#fff" stroke="#333" stroke-width="1"/><circle cx="7" cy="7" r="3" fill="#1a1a1a"/></svg>
<div style="position:absolute;left:720px;top:499px;width:50px;height:21px;box-sizing:border-box;border:1px solid #569de5;background:#fff;"></div>
<div style="position:absolute;left:724px;top:504.00px;font-size:11px;line-height:11px;color:#000;font-weight:normal;letter-spacing:-0.2px;white-space:pre;transform:scaleY(1.12);transform-origin:0 9.000px;">0,88</div>
<div style="position:absolute;left:774.5px;top:504.00px;font-size:11px;line-height:11px;color:#000;font-weight:normal;letter-spacing:0px;white-space:pre;transform:scaleY(1.12);transform-origin:0 9.000px;">CA</div>
<svg style="position:absolute;left:700px;top:525px" width="14" height="14"><circle cx="7" cy="7" r="6" fill="#fff" stroke="#333" stroke-width="1"/></svg>
<div style="position:absolute;left:720px;top:521px;width:50px;height:21px;box-sizing:border-box;border:1px solid #abadb3;background:#fff;"></div>
<div style="position:absolute;left:724px;top:526.00px;font-size:11px;line-height:11px;color:#000;font-weight:normal;letter-spacing:-0.2px;white-space:pre;transform:scaleY(1.12);transform-origin:0 9.000px;">-2,31</div>
<div style="position:absolute;left:774.5px;top:526.00px;font-size:11px;line-height:11px;color:#000;font-weight:normal;letter-spacing:-0.3px;white-space:pre;transform:scaleY(1.12);transform-origin:0 9.000px;">Stabilitätsmaß in % von lu</div>
<svg style="position:absolute;left:700px;top:547px" width="14" height="14"><circle cx="7" cy="7" r="6" fill="#fff" stroke="#333" stroke-width="1"/></svg>
<div style="position:absolute;left:720px;top:543px;width:50px;height:21px;box-sizing:border-box;border:1px solid #abadb3;background:#fff;"></div>
<div style="position:absolute;left:724px;top:548.00px;font-size:11px;line-height:11px;color:#000;font-weight:normal;letter-spacing:-0.2px;white-space:pre;transform:scaleY(1.12);transform-origin:0 9.000px;">0,0408</div>
<div style="position:absolute;left:774.5px;top:548.00px;font-size:11px;line-height:11px;color:#000;font-weight:normal;letter-spacing:-0.1px;white-space:pre;transform:scaleY(1.12);transform-origin:0 9.000px;">Schwerpunktrücklage in m</div>
<svg style="position:absolute;left:700px;top:569px" width="14" height="14"><circle cx="7" cy="7" r="6" fill="#fff" stroke="#333" stroke-width="1"/></svg>
<div style="position:absolute;left:720px;top:565px;width:50px;height:21px;box-sizing:border-box;border:1px solid #abadb3;background:#fff;"></div>
<div style="position:absolute;left:724px;top:570.00px;font-size:11px;line-height:11px;color:#000;font-weight:normal;letter-spacing:-0.2px;white-space:pre;transform:scaleY(1.12);transform-origin:0 9.000px;">11,289</div>
<div style="position:absolute;left:774.5px;top:570.00px;font-size:11px;line-height:11px;color:#000;font-weight:normal;letter-spacing:-0.14px;white-space:pre;transform:scaleY(1.12);transform-origin:0 9.000px;">Geschwindigkeit in m/s</div>
<div style="position:absolute;left:744px;top:502px;width:1px;height:13px;background:#000;"></div>
<div style="position:absolute;left:17.5px;top:542.00px;font-size:11px;line-height:11px;color:#000;font-weight:normal;letter-spacing:-0.25px;white-space:pre;transform:scaleY(1.12);transform-origin:0 9.000px;background:#f0f0f0;padding:0 1px;margin-left:-1px;">Klappe</div>
<div style="position:absolute;left:16px;top:564px;width:28px;height:17px;box-sizing:border-box;border:1px solid #adadad;background:linear-gradient(#f0f0f0,#e5e5e5);"></div>
<div style="position:absolute;left:47px;top:564px;width:28px;height:17px;box-sizing:border-box;border:1px solid #adadad;background:linear-gradient(#f0f0f0,#e5e5e5);"></div>
<svg style="position:absolute;left:0;top:0" width="925" height="605"><path d="M34 568.6 L25.3 572.8 L34 577 M56 568.6 L64.7 572.8 L56 577" fill="none" stroke="#000" stroke-width="1.7"/></svg>
<div style="position:absolute;left:88px;top:553.00px;font-size:11px;line-height:11px;color:#a0a0a0;font-weight:normal;letter-spacing:-0.27px;white-space:pre;transform:scaleY(1.12);transform-origin:0 9.000px;">Tiefe (L)</div>
<div style="position:absolute;left:85px;top:566px;width:30px;height:21px;box-sizing:border-box;border:1px solid #d9d9d9;background:#fff;"></div>
<div style="position:absolute;left:118.8px;top:571.00px;font-size:11px;line-height:11px;color:#a0a0a0;font-weight:normal;letter-spacing:0px;white-space:pre;transform:scaleY(1.12);transform-origin:0 9.000px;">%</div>
<div style="position:absolute;left:142px;top:553.00px;font-size:11px;line-height:11px;color:#a0a0a0;font-weight:normal;letter-spacing:-0.27px;white-space:pre;transform:scaleY(1.12);transform-origin:0 9.000px;">Tiefe (R)</div>
<div style="position:absolute;left:139px;top:566px;width:30px;height:21px;box-sizing:border-box;border:1px solid #d9d9d9;background:#fff;"></div>
<div style="position:absolute;left:172.6px;top:571.00px;font-size:11px;line-height:11px;color:#a0a0a0;font-weight:normal;letter-spacing:0px;white-space:pre;transform:scaleY(1.12);transform-origin:0 9.000px;">%</div>
<div style="position:absolute;left:202.6px;top:553.00px;font-size:11px;line-height:11px;color:#a0a0a0;font-weight:normal;letter-spacing:-0.38px;white-space:pre;transform:scaleY(1.12);transform-origin:0 9.000px;">Gruppe</div>
<div style="position:absolute;left:194px;top:566px;width:30px;height:21px;box-sizing:border-box;border:1px solid #d9d9d9;background:#fff;"></div>
<div style="position:absolute;left:230px;top:569px;width:16px;height:16px;box-sizing:border-box;border:1px solid #d9d9d9;background:#f0f0f0;"></div>
<div style="position:absolute;left:234px;top:572.00px;font-size:11px;line-height:11px;color:#a0a0a0;font-weight:normal;letter-spacing:0px;white-space:pre;transform:scaleY(1.12);transform-origin:0 9.000px;">w</div>
<div style="position:absolute;left:269.3px;top:553.00px;font-size:11px;line-height:11px;color:#a0a0a0;font-weight:normal;letter-spacing:0px;white-space:pre;transform:scaleY(1.12);transform-origin:0 9.000px;">Nr.</div>
<div style="position:absolute;left:259px;top:566px;width:30px;height:21px;box-sizing:border-box;border:1px solid #d9d9d9;background:#fff;"></div>
<div style="position:absolute;left:308px;top:553.00px;font-size:11px;line-height:11px;color:#a0a0a0;font-weight:normal;letter-spacing:-0.19px;white-space:pre;transform:scaleY(1.12);transform-origin:0 9.000px;">Ausschlag</div>
<div style="position:absolute;left:308px;top:566px;width:37px;height:21px;box-sizing:border-box;border:1px solid #d9d9d9;background:#fff;"></div>
<div style="position:absolute;left:350px;top:569.00px;font-size:11px;line-height:11px;color:#a0a0a0;font-weight:normal;letter-spacing:0px;white-space:pre;transform:scaleY(1.12);transform-origin:0 9.000px;">°</div>
<div style="position:absolute;left:371px;top:552px;width:48px;height:18px;box-sizing:border-box;border:1px solid #adadad;background:linear-gradient(#f0f0f0,#e5e5e5);"></div>
<div style="position:absolute;left:378.2px;top:556.00px;font-size:11px;line-height:11px;color:#000;font-weight:bold;letter-spacing:-0.33px;white-space:pre;transform:scaleY(1.12);transform-origin:0 9.000px;">setzen</div>
<div style="position:absolute;left:371px;top:574px;width:48px;height:18px;box-sizing:border-box;border:1px solid #d9d9d9;background:#f0f0f0;"></div>
<div style="position:absolute;left:376.8px;top:578.00px;font-size:11px;line-height:11px;color:#a0a0a0;font-weight:normal;letter-spacing:-0.2px;white-space:pre;transform:scaleY(1.12);transform-origin:0 9.000px;">löschen</div>
<div style="position:absolute;left:443.7px;top:542.00px;font-size:11px;line-height:11px;color:#000;font-weight:normal;letter-spacing:-0.19px;white-space:pre;transform:scaleY(1.12);transform-origin:0 9.000px;background:#f0f0f0;padding:0 1px;margin-left:-1px;">Knickstelle</div>
<div style="position:absolute;right:295.6px;top:553.00px;font-size:11px;line-height:11px;color:#000;font-weight:normal;letter-spacing:-0.16px;white-space:pre;transform:scaleY(1.12);transform-origin:0 9.000px;">Bedingung f. löschen</div>
<div style="position:absolute;left:440px;top:567px;width:191px;height:21px;box-sizing:border-box;border:1px solid #acacac;background:linear-gradient(#f2f2f2,#e4e4e4);"></div>
<div style="position:absolute;left:444px;top:572.00px;font-size:11px;line-height:11px;color:#000;font-weight:normal;letter-spacing:-0.17px;white-space:pre;transform:scaleY(1.12);transform-origin:0 9.000px;">beide Kl. löschen</div>
<svg style="position:absolute;left:617.5px;top:574px" width="10" height="9"><path d="M1.8 2.3 L5 6.6 L8.2 2.3" fill="none" stroke="#444" stroke-width="2.3"/></svg>
<div style="position:absolute;left:641px;top:552px;width:48px;height:18px;box-sizing:border-box;border:1px solid #d9d9d9;background:#f0f0f0;"></div>
<div style="position:absolute;left:648px;top:556.00px;font-size:11px;line-height:11px;color:#a0a0a0;font-weight:normal;letter-spacing:-0.2px;white-space:pre;transform:scaleY(1.12);transform-origin:0 9.000px;">setzen</div>
<div style="position:absolute;left:641px;top:574px;width:48px;height:18px;box-sizing:border-box;border:1px solid #adadad;background:linear-gradient(#f0f0f0,#e5e5e5);"></div>
<div style="position:absolute;left:646px;top:578.00px;font-size:11px;line-height:11px;color:#000;font-weight:normal;letter-spacing:-0.2px;white-space:pre;transform:scaleY(1.12);transform-origin:0 9.000px;">löschen</div>

</body></html>
